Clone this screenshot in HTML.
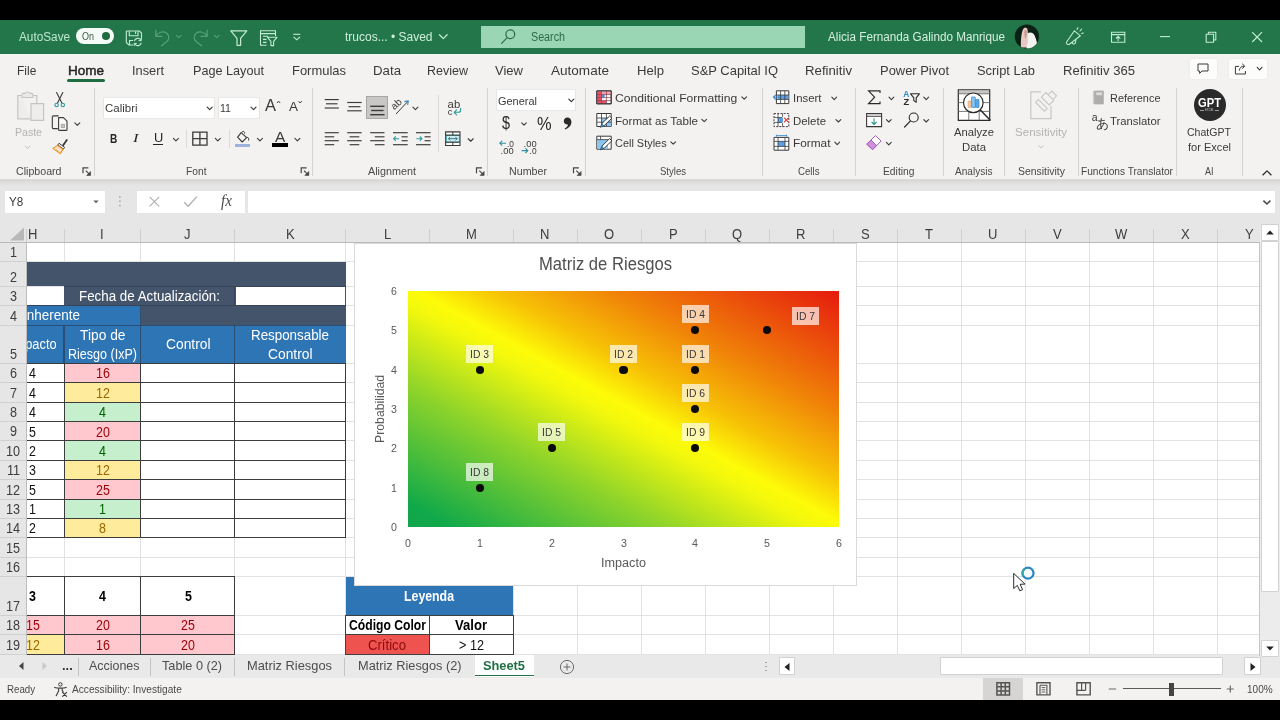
<!DOCTYPE html>
<html lang="es"><head><meta charset="utf-8"><title>Matriz de Riesgos - Excel</title>
<style>
html,body{margin:0;padding:0;}
body{width:1280px;height:720px;overflow:hidden;background:#000;position:relative;font-family:"Liberation Sans",sans-serif;}
#app{position:absolute;left:0;top:0;width:1280px;height:720px;overflow:hidden;will-change:transform;}
span{display:block;}
</style></head><body><div id="app">
<div style="position:absolute;left:0px;top:0px;width:1280px;height:20px;background:#000;"></div>
<div style="position:absolute;left:0px;top:700px;width:1280px;height:20px;background:#000;"></div>
<div style="position:absolute;left:0px;top:19.8px;width:1280px;height:33.9px;background:#22764a;"></div>
<div style="position:absolute;left:0px;top:53.7px;width:1280px;height:125.1px;background:#f3f2f1;"></div>
<div style="position:absolute;left:0px;top:53.7px;width:1280px;height:1.2px;background:#ecf8f0;"></div>
<div style="position:absolute;left:0px;top:178.8px;width:1280px;height:46.2px;background:#e6e6e6;background:linear-gradient(#dedcda 0px,#d8d6d4 1.2px,#e1e0df 4px,#e6e6e6 7.5px);"></div>
<div style="position:absolute;left:0px;top:225px;width:1280px;height:430px;background:#fff;"></div>
<div style="position:absolute;left:0px;top:655.3px;width:1280px;height:23.1px;background:#e9e9e9;"></div>
<div style="position:absolute;left:0px;top:678.4px;width:1280px;height:21.6px;background:#f3f2f1;"></div>
<span style='position:absolute;left:18.80px;top:30.94px;font-size:12.5px;line-height:12.5px;color:#bfe8cf;white-space:pre;transform-origin:0 0;transform:scaleX(0.9425);'>AutoSave</span>
<div style="position:absolute;left:75.7px;top:28.1px;width:38px;height:15.6px;border-radius:8px;background:#f4fbf6"></div>
<span style='position:absolute;left:82.00px;top:31.98px;font-size:10.2px;line-height:10.2px;color:#3d5c4a;white-space:pre;transform-origin:0 0;transform:scaleX(0.8828);'>On</span>
<div style="position:absolute;left:101.8px;top:32.2px;width:8px;height:8px;border-radius:4px;background:#1f6a41"></div>
<span style='position:absolute;left:345.00px;top:30.94px;font-size:12.5px;line-height:12.5px;color:#cfeedb;white-space:pre;transform-origin:0 0;transform:scaleX(0.9591);'>trucos... • Saved</span>
<div style="position:absolute;left:481.4px;top:25.6px;width:323.6px;height:22.4px;background:#9bd6b4;"></div>
<span style='position:absolute;left:531.00px;top:30.94px;font-size:12.5px;line-height:12.5px;color:#2c6b4a;white-space:pre;transform-origin:0 0;transform:scaleX(0.8584);'>Search</span>
<span style='position:absolute;left:827.50px;top:30.94px;font-size:12.5px;line-height:12.5px;color:#d6f0e0;white-space:pre;transform-origin:0 0;transform:scaleX(0.9365);'>Alicia Fernanda Galindo Manrique</span>
<span style='position:absolute;left:16.90px;top:64.01px;font-size:13.6px;line-height:13.6px;color:#3b3a39;white-space:pre;transform-origin:0 0;transform:scaleX(0.8810);'>File</span>
<span style='position:absolute;left:132.00px;top:64.01px;font-size:13.6px;line-height:13.6px;color:#3b3a39;white-space:pre;transform-origin:0 0;transform:scaleX(0.9412);'>Insert</span>
<span style='position:absolute;left:193.00px;top:64.01px;font-size:13.6px;line-height:13.6px;color:#3b3a39;white-space:pre;transform-origin:0 0;transform:scaleX(0.9300);'>Page Layout</span>
<span style='position:absolute;left:292.00px;top:64.01px;font-size:13.6px;line-height:13.6px;color:#3b3a39;white-space:pre;transform-origin:0 0;transform:scaleX(0.9531);'>Formulas</span>
<span style='position:absolute;left:373.00px;top:64.01px;font-size:13.6px;line-height:13.6px;color:#3b3a39;white-space:pre;transform-origin:0 0;transform:scaleX(0.9750);'>Data</span>
<span style='position:absolute;left:427.00px;top:64.01px;font-size:13.6px;line-height:13.6px;color:#3b3a39;white-space:pre;transform-origin:0 0;transform:scaleX(0.9197);'>Review</span>
<span style='position:absolute;left:495.00px;top:64.01px;font-size:13.6px;line-height:13.6px;color:#3b3a39;white-space:pre;transform-origin:0 0;transform:scaleX(0.9583);'>View</span>
<span style='position:absolute;left:551.00px;top:64.01px;font-size:13.6px;line-height:13.6px;color:#3b3a39;white-space:pre;transform-origin:0 0;transform:scaleX(0.9968);'>Automate</span>
<span style='position:absolute;left:637.00px;top:64.01px;font-size:13.6px;line-height:13.6px;color:#3b3a39;white-space:pre;transform-origin:0 0;transform:scaleX(0.9654);'>Help</span>
<span style='position:absolute;left:691.00px;top:64.01px;font-size:13.6px;line-height:13.6px;color:#3b3a39;white-space:pre;transform-origin:0 0;transform:scaleX(0.9541);'>S&amp;P Capital IQ</span>
<span style='position:absolute;left:805.00px;top:64.01px;font-size:13.6px;line-height:13.6px;color:#3b3a39;white-space:pre;transform-origin:0 0;transform:scaleX(0.9719);'>Refinitiv</span>
<span style='position:absolute;left:880.00px;top:64.01px;font-size:13.6px;line-height:13.6px;color:#3b3a39;white-space:pre;transform-origin:0 0;transform:scaleX(0.9513);'>Power Pivot</span>
<span style='position:absolute;left:977.00px;top:64.01px;font-size:13.6px;line-height:13.6px;color:#3b3a39;white-space:pre;transform-origin:0 0;transform:scaleX(0.9474);'>Script Lab</span>
<span style='position:absolute;left:1063.00px;top:64.01px;font-size:13.6px;line-height:13.6px;color:#3b3a39;white-space:pre;transform-origin:0 0;transform:scaleX(0.9624);'>Refinitiv 365</span>
<span style='position:absolute;left:67.70px;top:64.01px;font-size:13.6px;line-height:13.6px;color:#252423;white-space:pre;transform-origin:0 0;transform:scaleX(0.9954);-webkit-text-stroke:0.45px #252423;'>Home</span>
<div style="position:absolute;left:67px;top:78.8px;width:38px;height:3px;background:#1f6e43;border-radius:1.5px;"></div>
<div style="position:absolute;left:1189.5px;top:59px;width:27.8px;height:20px;background:#fcfcfb;border-radius:2px;box-shadow:0 0 2px rgba(0,0,0,.08);"></div>
<div style="position:absolute;left:1228.5px;top:59px;width:38.1px;height:20px;background:#fcfcfb;border-radius:2px;box-shadow:0 0 2px rgba(0,0,0,.08);"></div>
<div style="position:absolute;left:94px;top:88px;width:1px;height:88px;background:#d4d2d0;"></div>
<div style="position:absolute;left:312px;top:88px;width:1px;height:88px;background:#d4d2d0;"></div>
<div style="position:absolute;left:486.5px;top:88px;width:1px;height:88px;background:#d4d2d0;"></div>
<div style="position:absolute;left:584.5px;top:88px;width:1px;height:88px;background:#d4d2d0;"></div>
<div style="position:absolute;left:762px;top:88px;width:1px;height:88px;background:#d4d2d0;"></div>
<div style="position:absolute;left:854.5px;top:88px;width:1px;height:88px;background:#d4d2d0;"></div>
<div style="position:absolute;left:942.5px;top:88px;width:1px;height:88px;background:#d4d2d0;"></div>
<div style="position:absolute;left:1004px;top:88px;width:1px;height:88px;background:#d4d2d0;"></div>
<div style="position:absolute;left:1077.5px;top:88px;width:1px;height:88px;background:#d4d2d0;"></div>
<div style="position:absolute;left:1175.5px;top:88px;width:1px;height:88px;background:#d4d2d0;"></div>
<div style="position:absolute;left:1241.5px;top:88px;width:1px;height:88px;background:#d4d2d0;"></div>
<div style="position:absolute;left:185.5px;top:130px;width:1px;height:18px;background:#dcdad8;"></div>
<div style="position:absolute;left:228.5px;top:130px;width:1px;height:18px;background:#dcdad8;"></div>
<div style="position:absolute;left:437.5px;top:95px;width:1px;height:57px;background:#dcdad8;"></div>
<span style='position:absolute;left:15.50px;top:166.26px;font-size:10.7px;line-height:10.7px;color:#4a4846;white-space:pre;transform-origin:0 0;transform:scaleX(0.9945);'>Clipboard</span>
<span style='position:absolute;left:185.50px;top:166.26px;font-size:10.7px;line-height:10.7px;color:#4a4846;white-space:pre;transform-origin:0 0;transform:scaleX(0.9584);'>Font</span>
<span style='position:absolute;left:368.00px;top:166.26px;font-size:10.7px;line-height:10.7px;color:#4a4846;white-space:pre;transform-origin:0 0;transform:scaleX(1.0099);'>Alignment</span>
<span style='position:absolute;left:509.00px;top:166.26px;font-size:10.7px;line-height:10.7px;color:#4a4846;white-space:pre;transform-origin:0 0;transform:scaleX(0.9996);'>Number</span>
<span style='position:absolute;left:660.00px;top:166.26px;font-size:10.7px;line-height:10.7px;color:#4a4846;white-space:pre;transform-origin:0 0;transform:scaleX(0.8932);'>Styles</span>
<span style='position:absolute;left:797.50px;top:166.26px;font-size:10.7px;line-height:10.7px;color:#4a4846;white-space:pre;transform-origin:0 0;transform:scaleX(0.9047);'>Cells</span>
<span style='position:absolute;left:883.00px;top:166.26px;font-size:10.7px;line-height:10.7px;color:#4a4846;white-space:pre;transform-origin:0 0;transform:scaleX(0.9637);'>Editing</span>
<span style='position:absolute;left:955.00px;top:166.26px;font-size:10.7px;line-height:10.7px;color:#4a4846;white-space:pre;transform-origin:0 0;transform:scaleX(0.9423);'>Analysis</span>
<span style='position:absolute;left:1018.00px;top:166.26px;font-size:10.7px;line-height:10.7px;color:#4a4846;white-space:pre;transform-origin:0 0;transform:scaleX(0.9766);'>Sensitivity</span>
<span style='position:absolute;left:1081.00px;top:166.26px;font-size:10.7px;line-height:10.7px;color:#4a4846;white-space:pre;transform-origin:0 0;transform:scaleX(0.9501);'>Functions Translator</span>
<span style='position:absolute;left:1204.50px;top:166.26px;font-size:10.7px;line-height:10.7px;color:#4a4846;white-space:pre;transform-origin:0 0;transform:scaleX(0.8408);'>AI</span>
<span style='position:absolute;left:15.00px;top:126.31px;font-size:11.7px;line-height:11.7px;color:#b5b3b1;white-space:pre;transform-origin:0 0;transform:scaleX(0.9033);'>Paste</span>
<div style="position:absolute;left:102.5px;top:96.8px;width:112.5px;height:21.8px;background:#fff;border-radius:2px;box-shadow:inset 0 0 0 0.6px #d6d4d2;"></div>
<div style="position:absolute;left:217.8px;top:96.8px;width:41.8px;height:21.8px;background:#fff;border-radius:2px;box-shadow:inset 0 0 0 0.6px #d6d4d2;"></div>
<span style='position:absolute;left:104.50px;top:102.31px;font-size:11.7px;line-height:11.7px;color:#3b3a39;white-space:pre;transform-origin:0 0;transform:scaleX(0.9811);'>Calibri</span>
<span style='position:absolute;left:220.00px;top:102.31px;font-size:11.7px;line-height:11.7px;color:#3b3a39;white-space:pre;transform-origin:0 0;transform:scaleX(0.9060);'>11</span>
<span style='position:absolute;left:109.70px;top:132.08px;font-size:13.4px;line-height:13.4px;color:#252423;white-space:pre;transform-origin:0 0;transform:scaleX(0.7548);font-weight:700;'>B</span>
<span style='position:absolute;left:133.00px;top:131.09px;font-size:13.5px;line-height:13.5px;color:#252423;white-space:pre;transform-origin:0 0;transform:scaleX(1.2222);font-style:italic;font-family:"Liberation Serif", serif;'>I</span>
<span style='position:absolute;left:153.50px;top:131.95px;font-size:12.6px;line-height:12.6px;color:#252423;white-space:pre;transform-origin:0 0;transform:scaleX(1.0209);'>U</span>
<div style="position:absolute;left:153px;top:144px;width:10.2px;height:1px;background:#252423;"></div>
<span style='position:absolute;left:265.00px;top:97.41px;font-size:16.2px;line-height:16.2px;color:#3b3a39;white-space:pre;transform-origin:0 0;transform:scaleX(1.0173);'>A</span>
<span style='position:absolute;left:289.00px;top:100.95px;font-size:12.6px;line-height:12.6px;color:#3b3a39;white-space:pre;transform-origin:0 0;transform:scaleX(1.0706);'>A</span>
<span style='position:absolute;left:275.00px;top:130.06px;font-size:14.6px;line-height:14.6px;color:#3b3a39;white-space:pre;transform-origin:0 0;transform:scaleX(1.0581);'>A</span>
<div style="position:absolute;left:272px;top:143.3px;width:16px;height:4px;background:#000;"></div>
<div style="position:absolute;left:234.6px;top:143.9px;width:15.4px;height:2.9px;background:#9fb2dc;"></div>
<div style="position:absolute;left:366.4px;top:96.4px;width:21.6px;height:22.8px;background:#c9c7c5;box-shadow:inset 0 0 0 1px #a9a7a5;"></div>
<div style="position:absolute;left:496.3px;top:88.7px;width:80px;height:22px;background:#fff;border-radius:2px;box-shadow:inset 0 0 0 0.6px #d6d4d2;"></div>
<span style='position:absolute;left:498.00px;top:95.31px;font-size:11.7px;line-height:11.7px;color:#3b3a39;white-space:pre;transform-origin:0 0;transform:scaleX(0.9376);'>General</span>
<span style='position:absolute;left:502.00px;top:114.81px;font-size:17.5px;line-height:17.5px;color:#2b2a29;white-space:pre;transform-origin:0 0;transform:scaleX(0.8218);'>$</span>
<span style='position:absolute;left:536.70px;top:114.95px;font-size:18.4px;line-height:18.4px;color:#2b2a29;white-space:pre;transform-origin:0 0;transform:scaleX(0.8925);'>%</span>
<span style='position:absolute;left:614.60px;top:92.31px;font-size:11.7px;line-height:11.7px;color:#3b3a39;white-space:pre;transform-origin:0 0;transform:scaleX(1.0392);'>Conditional Formatting</span>
<span style='position:absolute;left:614.60px;top:115.31px;font-size:11.7px;line-height:11.7px;color:#3b3a39;white-space:pre;transform-origin:0 0;transform:scaleX(0.9929);'>Format as Table</span>
<span style='position:absolute;left:614.60px;top:137.31px;font-size:11.7px;line-height:11.7px;color:#3b3a39;white-space:pre;transform-origin:0 0;transform:scaleX(0.9345);'>Cell Styles</span>
<span style='position:absolute;left:792.50px;top:92.31px;font-size:11.7px;line-height:11.7px;color:#3b3a39;white-space:pre;transform-origin:0 0;transform:scaleX(0.9749);'>Insert</span>
<span style='position:absolute;left:792.50px;top:115.31px;font-size:11.7px;line-height:11.7px;color:#3b3a39;white-space:pre;transform-origin:0 0;transform:scaleX(0.9764);'>Delete</span>
<span style='position:absolute;left:792.50px;top:137.31px;font-size:11.7px;line-height:11.7px;color:#3b3a39;white-space:pre;transform-origin:0 0;transform:scaleX(1.0131);'>Format</span>
<span style='position:absolute;left:954.00px;top:126.31px;font-size:11.7px;line-height:11.7px;color:#3b3a39;white-space:pre;transform-origin:0 0;transform:scaleX(0.9617);'>Analyze</span>
<span style='position:absolute;left:962.20px;top:141.31px;font-size:11.7px;line-height:11.7px;color:#3b3a39;white-space:pre;transform-origin:0 0;transform:scaleX(0.9715);'>Data</span>
<span style='position:absolute;left:1015.00px;top:126.31px;font-size:11.7px;line-height:11.7px;color:#b5b3b1;white-space:pre;transform-origin:0 0;transform:scaleX(0.9881);'>Sensitivity</span>
<span style='position:absolute;left:1110.00px;top:92.31px;font-size:11.7px;line-height:11.7px;color:#3b3a39;white-space:pre;transform-origin:0 0;transform:scaleX(0.9363);'>Reference</span>
<span style='position:absolute;left:1110.00px;top:115.31px;font-size:11.7px;line-height:11.7px;color:#3b3a39;white-space:pre;transform-origin:0 0;transform:scaleX(0.9677);'>Translator</span>
<span style='position:absolute;left:1187.00px;top:126.31px;font-size:11.7px;line-height:11.7px;color:#3b3a39;white-space:pre;transform-origin:0 0;transform:scaleX(0.9031);'>ChatGPT</span>
<span style='position:absolute;left:1188.00px;top:141.31px;font-size:11.7px;line-height:11.7px;color:#3b3a39;white-space:pre;transform-origin:0 0;transform:scaleX(0.9457);'>for Excel</span>
<div style="position:absolute;left:1193.5px;top:89px;width:32px;height:32px;border-radius:16px;background:#2a2a2a"></div>
<span style='position:absolute;left:1197.80px;top:97.09px;font-size:12.2px;line-height:12.2px;color:#fff;white-space:pre;transform-origin:0 0;transform:scaleX(0.9177);font-weight:700;'>GPT</span>
<span style='position:absolute;left:1205.00px;top:109.17px;font-size:3px;line-height:3px;color:#cfcfcf;white-space:pre;transform-origin:0 0;transform:scaleX(0.9143);'>EXCEL</span>
<div style="position:absolute;left:1200px;top:110px;width:3.6px;height:0.5px;background:#9a9a9a;"></div>
<div style="position:absolute;left:1215.4px;top:110px;width:3.6px;height:0.5px;background:#9a9a9a;"></div>
<div style="position:absolute;left:4.6px;top:190.6px;width:100.6px;height:22px;background:#fff;"></div>
<div style="position:absolute;left:136.6px;top:190.6px;width:108.2px;height:22px;background:#fff;"></div>
<div style="position:absolute;left:248px;top:190.6px;width:1027.2px;height:22px;background:#fff;"></div>
<span style='position:absolute;left:9.20px;top:195.15px;font-size:13.2px;line-height:13.2px;color:#3b3a39;white-space:pre;transform-origin:0 0;transform:scaleX(0.8798);'>Y8</span>
<span style='position:absolute;left:221.00px;top:192.98px;font-size:16px;line-height:16px;color:#4a4a4a;white-space:pre;transform-origin:0 0;transform:scaleX(0.9353);font-style:italic;font-family:"Liberation Serif", serif;'>fx</span>
<div style="position:absolute;left:0px;top:225px;width:1260px;height:18px;background:#e6e6e6;"></div>
<div style="position:absolute;left:63.5px;top:243px;width:1px;height:412px;background:#e2e2e2;"></div>
<div style="position:absolute;left:63.5px;top:229px;width:1px;height:14px;background:#cfcfcf;"></div>
<div style="position:absolute;left:140px;top:243px;width:1px;height:412px;background:#e2e2e2;"></div>
<div style="position:absolute;left:140px;top:229px;width:1px;height:14px;background:#cfcfcf;"></div>
<div style="position:absolute;left:234px;top:243px;width:1px;height:412px;background:#e2e2e2;"></div>
<div style="position:absolute;left:234px;top:229px;width:1px;height:14px;background:#cfcfcf;"></div>
<div style="position:absolute;left:345px;top:243px;width:1px;height:412px;background:#e2e2e2;"></div>
<div style="position:absolute;left:345px;top:229px;width:1px;height:14px;background:#cfcfcf;"></div>
<div style="position:absolute;left:428.5px;top:243px;width:1px;height:412px;background:#e2e2e2;"></div>
<div style="position:absolute;left:428.5px;top:229px;width:1px;height:14px;background:#cfcfcf;"></div>
<div style="position:absolute;left:512.5px;top:243px;width:1px;height:412px;background:#e2e2e2;"></div>
<div style="position:absolute;left:512.5px;top:229px;width:1px;height:14px;background:#cfcfcf;"></div>
<div style="position:absolute;left:576.5px;top:243px;width:1px;height:412px;background:#e2e2e2;"></div>
<div style="position:absolute;left:576.5px;top:229px;width:1px;height:14px;background:#cfcfcf;"></div>
<div style="position:absolute;left:640.5px;top:243px;width:1px;height:412px;background:#e2e2e2;"></div>
<div style="position:absolute;left:640.5px;top:229px;width:1px;height:14px;background:#cfcfcf;"></div>
<div style="position:absolute;left:704.5px;top:243px;width:1px;height:412px;background:#e2e2e2;"></div>
<div style="position:absolute;left:704.5px;top:229px;width:1px;height:14px;background:#cfcfcf;"></div>
<div style="position:absolute;left:768.5px;top:243px;width:1px;height:412px;background:#e2e2e2;"></div>
<div style="position:absolute;left:768.5px;top:229px;width:1px;height:14px;background:#cfcfcf;"></div>
<div style="position:absolute;left:832.5px;top:243px;width:1px;height:412px;background:#e2e2e2;"></div>
<div style="position:absolute;left:832.5px;top:229px;width:1px;height:14px;background:#cfcfcf;"></div>
<div style="position:absolute;left:896.5px;top:243px;width:1px;height:412px;background:#e2e2e2;"></div>
<div style="position:absolute;left:896.5px;top:229px;width:1px;height:14px;background:#cfcfcf;"></div>
<div style="position:absolute;left:960.5px;top:243px;width:1px;height:412px;background:#e2e2e2;"></div>
<div style="position:absolute;left:960.5px;top:229px;width:1px;height:14px;background:#cfcfcf;"></div>
<div style="position:absolute;left:1024.5px;top:243px;width:1px;height:412px;background:#e2e2e2;"></div>
<div style="position:absolute;left:1024.5px;top:229px;width:1px;height:14px;background:#cfcfcf;"></div>
<div style="position:absolute;left:1088.5px;top:243px;width:1px;height:412px;background:#e2e2e2;"></div>
<div style="position:absolute;left:1088.5px;top:229px;width:1px;height:14px;background:#cfcfcf;"></div>
<div style="position:absolute;left:1152.5px;top:243px;width:1px;height:412px;background:#e2e2e2;"></div>
<div style="position:absolute;left:1152.5px;top:229px;width:1px;height:14px;background:#cfcfcf;"></div>
<div style="position:absolute;left:1216.5px;top:243px;width:1px;height:412px;background:#e2e2e2;"></div>
<div style="position:absolute;left:1216.5px;top:229px;width:1px;height:14px;background:#cfcfcf;"></div>
<div style="position:absolute;left:1261.5px;top:229px;width:1px;height:14px;background:#cfcfcf;"></div>
<div style="position:absolute;left:25.5px;top:229px;width:1px;height:14px;background:#cfcfcf;"></div>
<div style="position:absolute;left:26px;top:261px;width:1233.5px;height:1px;background:#e2e2e2;"></div>
<div style="position:absolute;left:26px;top:285.7px;width:1233.5px;height:1px;background:#e2e2e2;"></div>
<div style="position:absolute;left:26px;top:305.3px;width:1233.5px;height:1px;background:#e2e2e2;"></div>
<div style="position:absolute;left:26px;top:324.6px;width:1233.5px;height:1px;background:#e2e2e2;"></div>
<div style="position:absolute;left:26px;top:362.9px;width:1233.5px;height:1px;background:#e2e2e2;"></div>
<div style="position:absolute;left:26px;top:382.3px;width:1233.5px;height:1px;background:#e2e2e2;"></div>
<div style="position:absolute;left:26px;top:401.7px;width:1233.5px;height:1px;background:#e2e2e2;"></div>
<div style="position:absolute;left:26px;top:421px;width:1233.5px;height:1px;background:#e2e2e2;"></div>
<div style="position:absolute;left:26px;top:440.4px;width:1233.5px;height:1px;background:#e2e2e2;"></div>
<div style="position:absolute;left:26px;top:459.8px;width:1233.5px;height:1px;background:#e2e2e2;"></div>
<div style="position:absolute;left:26px;top:479.1px;width:1233.5px;height:1px;background:#e2e2e2;"></div>
<div style="position:absolute;left:26px;top:498.8px;width:1233.5px;height:1px;background:#e2e2e2;"></div>
<div style="position:absolute;left:26px;top:517.9px;width:1233.5px;height:1px;background:#e2e2e2;"></div>
<div style="position:absolute;left:26px;top:537.2px;width:1233.5px;height:1px;background:#e2e2e2;"></div>
<div style="position:absolute;left:26px;top:556.6px;width:1233.5px;height:1px;background:#e2e2e2;"></div>
<div style="position:absolute;left:26px;top:576px;width:1233.5px;height:1px;background:#e2e2e2;"></div>
<div style="position:absolute;left:26px;top:614.7px;width:1233.5px;height:1px;background:#e2e2e2;"></div>
<div style="position:absolute;left:26px;top:634.1px;width:1233.5px;height:1px;background:#e2e2e2;"></div>
<div style="position:absolute;left:26px;top:653.5px;width:1233.5px;height:1px;background:#e2e2e2;"></div>
<div style="position:absolute;left:0px;top:242.3px;width:1260px;height:1px;background:#b9b9b9;"></div>
<svg style="position:absolute;left:9px;top:227px;" width="16" height="14" viewBox="0 0 16 14"><path d="M15 0.5V13.5H1Z" fill="#b8b8b8"/></svg>
<span style='position:absolute;left:27.59px;top:227.37px;font-size:14px;line-height:14px;color:#3d3d3d;white-space:pre;transform-origin:0 0;transform:scaleX(0.9300);'>H</span>
<span style='position:absolute;left:100.44px;top:227.37px;font-size:14px;line-height:14px;color:#3d3d3d;white-space:pre;transform-origin:0 0;transform:scaleX(0.9300);'>I</span>
<span style='position:absolute;left:184.25px;top:227.37px;font-size:14px;line-height:14px;color:#3d3d3d;white-space:pre;transform-origin:0 0;transform:scaleX(0.9300);'>J</span>
<span style='position:absolute;left:285.66px;top:227.37px;font-size:14px;line-height:14px;color:#3d3d3d;white-space:pre;transform-origin:0 0;transform:scaleX(0.9300);'>K</span>
<span style='position:absolute;left:383.62px;top:227.37px;font-size:14px;line-height:14px;color:#3d3d3d;white-space:pre;transform-origin:0 0;transform:scaleX(0.9300);'>L</span>
<span style='position:absolute;left:465.57px;top:227.37px;font-size:14px;line-height:14px;color:#3d3d3d;white-space:pre;transform-origin:0 0;transform:scaleX(0.9300);'>M</span>
<span style='position:absolute;left:540.29px;top:227.37px;font-size:14px;line-height:14px;color:#3d3d3d;white-space:pre;transform-origin:0 0;transform:scaleX(0.9300);'>N</span>
<span style='position:absolute;left:603.94px;top:227.37px;font-size:14px;line-height:14px;color:#3d3d3d;white-space:pre;transform-origin:0 0;transform:scaleX(0.9300);'>O</span>
<span style='position:absolute;left:668.66px;top:227.37px;font-size:14px;line-height:14px;color:#3d3d3d;white-space:pre;transform-origin:0 0;transform:scaleX(0.9300);'>P</span>
<span style='position:absolute;left:731.94px;top:227.37px;font-size:14px;line-height:14px;color:#3d3d3d;white-space:pre;transform-origin:0 0;transform:scaleX(0.9300);'>Q</span>
<span style='position:absolute;left:796.29px;top:227.37px;font-size:14px;line-height:14px;color:#3d3d3d;white-space:pre;transform-origin:0 0;transform:scaleX(0.9300);'>R</span>
<span style='position:absolute;left:860.66px;top:227.37px;font-size:14px;line-height:14px;color:#3d3d3d;white-space:pre;transform-origin:0 0;transform:scaleX(0.9300);'>S</span>
<span style='position:absolute;left:925.02px;top:227.37px;font-size:14px;line-height:14px;color:#3d3d3d;white-space:pre;transform-origin:0 0;transform:scaleX(0.9300);'>T</span>
<span style='position:absolute;left:988.29px;top:227.37px;font-size:14px;line-height:14px;color:#3d3d3d;white-space:pre;transform-origin:0 0;transform:scaleX(0.9300);'>U</span>
<span style='position:absolute;left:1052.66px;top:227.37px;font-size:14px;line-height:14px;color:#3d3d3d;white-space:pre;transform-origin:0 0;transform:scaleX(0.9300);'>V</span>
<span style='position:absolute;left:1114.85px;top:227.37px;font-size:14px;line-height:14px;color:#3d3d3d;white-space:pre;transform-origin:0 0;transform:scaleX(0.9300);'>W</span>
<span style='position:absolute;left:1180.66px;top:227.37px;font-size:14px;line-height:14px;color:#3d3d3d;white-space:pre;transform-origin:0 0;transform:scaleX(0.9300);'>X</span>
<span style='position:absolute;left:1244.66px;top:227.37px;font-size:14px;line-height:14px;color:#3d3d3d;white-space:pre;transform-origin:0 0;transform:scaleX(0.9300);'>Y</span>
<div style="position:absolute;left:26px;top:261.5px;width:319.5px;height:24.7px;background:#44546a;"></div>
<div style="position:absolute;left:64px;top:286.2px;width:170.5px;height:19.6px;background:#44546a;"></div>
<div style="position:absolute;left:234.5px;top:286.2px;width:111px;height:1px;background:#44546a;"></div>
<div style="position:absolute;left:234.5px;top:304.8px;width:111px;height:1px;background:#44546a;"></div>
<div style="position:absolute;left:344.5px;top:286.2px;width:1.3px;height:19.6px;background:#44546a;"></div>
<div style="position:absolute;left:234px;top:286.2px;width:1.5px;height:19.6px;background:#44546a;"></div>
<div style="position:absolute;left:26px;top:305.8px;width:114.5px;height:19.3px;background:#2e75b6;"></div>
<div style="position:absolute;left:140.5px;top:305.8px;width:205px;height:19.3px;background:#44546a;"></div>
<div style="position:absolute;left:26px;top:325.1px;width:319.5px;height:38.3px;background:#2e75b6;"></div>
<div style="position:absolute;left:63.5px;top:286.2px;width:1px;height:19.6px;background:#44546a;"></div>
<div style="position:absolute;left:64px;top:285.7px;width:281.5px;height:1px;background:#36445a;"></div>
<div style="position:absolute;left:26px;top:305.3px;width:319.5px;height:1px;background:#36445a;"></div>
<div style="position:absolute;left:234.2px;top:286.2px;width:1px;height:19.6px;background:#36445a;"></div>
<span style='position:absolute;left:79.00px;top:289.94px;font-size:13.8px;line-height:13.8px;color:#fff;white-space:pre;transform-origin:0 0;transform:scaleX(0.9675);'>Fecha de Actualización:</span>
<span style='position:absolute;left:23.20px;top:308.94px;font-size:13.8px;line-height:13.8px;color:#fff;white-space:pre;transform-origin:0 0;transform:scaleX(0.9758);'>Inherente</span>
<span style='position:absolute;left:11.00px;top:337.94px;font-size:13.8px;line-height:13.8px;color:#fff;white-space:pre;transform-origin:0 0;transform:scaleX(0.9291);'>Impacto</span>
<span style='position:absolute;left:79.50px;top:328.94px;font-size:13.8px;line-height:13.8px;color:#fff;white-space:pre;transform-origin:0 0;transform:scaleX(0.9997);'>Tipo de</span>
<span style='position:absolute;left:68.00px;top:347.94px;font-size:13.8px;line-height:13.8px;color:#fff;white-space:pre;transform-origin:0 0;transform:scaleX(0.9090);'>Riesgo (IxP)</span>
<span style='position:absolute;left:165.50px;top:337.94px;font-size:13.8px;line-height:13.8px;color:#fff;white-space:pre;transform-origin:0 0;transform:scaleX(1.0004);'>Control</span>
<span style='position:absolute;left:251.00px;top:328.94px;font-size:13.8px;line-height:13.8px;color:#fff;white-space:pre;transform-origin:0 0;transform:scaleX(0.9684);'>Responsable</span>
<span style='position:absolute;left:267.50px;top:347.94px;font-size:13.8px;line-height:13.8px;color:#fff;white-space:pre;transform-origin:0 0;transform:scaleX(1.0004);'>Control</span>
<div style="position:absolute;left:63.4px;top:325.1px;width:1.2px;height:38.3px;background:#2a4d73;"></div>
<div style="position:absolute;left:139.9px;top:325.1px;width:1.2px;height:38.3px;background:#2a4d73;"></div>
<div style="position:absolute;left:233.9px;top:325.1px;width:1.2px;height:38.3px;background:#2a4d73;"></div>
<div style="position:absolute;left:26px;top:324.6px;width:319.5px;height:1px;background:#2a4d73;"></div>
<div style="position:absolute;left:140px;top:305.8px;width:1px;height:19.3px;background:#34506f;"></div>
<div style="position:absolute;left:64px;top:363.4px;width:76.5px;height:19.4px;background:#ffc7ce;"></div>
<span style='position:absolute;left:28.64px;top:366.94px;font-size:13.8px;line-height:13.8px;color:#111;white-space:pre;transform-origin:0 0;transform:scaleX(0.9000);'>4</span>
<span style='position:absolute;left:95.59px;top:366.94px;font-size:13.8px;line-height:13.8px;color:#9c0006;white-space:pre;transform-origin:0 0;transform:scaleX(0.9000);'>16</span>
<div style="position:absolute;left:64px;top:382.8px;width:76.5px;height:19.4px;background:#ffeb9c;"></div>
<span style='position:absolute;left:28.64px;top:386.94px;font-size:13.8px;line-height:13.8px;color:#111;white-space:pre;transform-origin:0 0;transform:scaleX(0.9000);'>4</span>
<span style='position:absolute;left:95.59px;top:386.94px;font-size:13.8px;line-height:13.8px;color:#9c6500;white-space:pre;transform-origin:0 0;transform:scaleX(0.9000);'>12</span>
<div style="position:absolute;left:64px;top:402.2px;width:76.5px;height:19.3px;background:#c6efce;"></div>
<span style='position:absolute;left:28.64px;top:405.94px;font-size:13.8px;line-height:13.8px;color:#111;white-space:pre;transform-origin:0 0;transform:scaleX(0.9000);'>4</span>
<span style='position:absolute;left:99.04px;top:405.94px;font-size:13.8px;line-height:13.8px;color:#006100;white-space:pre;transform-origin:0 0;transform:scaleX(0.9000);'>4</span>
<div style="position:absolute;left:64px;top:421.5px;width:76.5px;height:19.4px;background:#ffc7ce;"></div>
<span style='position:absolute;left:28.64px;top:425.94px;font-size:13.8px;line-height:13.8px;color:#111;white-space:pre;transform-origin:0 0;transform:scaleX(0.9000);'>5</span>
<span style='position:absolute;left:95.59px;top:425.94px;font-size:13.8px;line-height:13.8px;color:#9c0006;white-space:pre;transform-origin:0 0;transform:scaleX(0.9000);'>20</span>
<div style="position:absolute;left:64px;top:440.9px;width:76.5px;height:19.4px;background:#c6efce;"></div>
<span style='position:absolute;left:28.64px;top:444.94px;font-size:13.8px;line-height:13.8px;color:#111;white-space:pre;transform-origin:0 0;transform:scaleX(0.9000);'>2</span>
<span style='position:absolute;left:99.04px;top:444.94px;font-size:13.8px;line-height:13.8px;color:#006100;white-space:pre;transform-origin:0 0;transform:scaleX(0.9000);'>4</span>
<div style="position:absolute;left:64px;top:460.3px;width:76.5px;height:19.3px;background:#ffeb9c;"></div>
<span style='position:absolute;left:28.64px;top:463.94px;font-size:13.8px;line-height:13.8px;color:#111;white-space:pre;transform-origin:0 0;transform:scaleX(0.9000);'>3</span>
<span style='position:absolute;left:95.59px;top:463.94px;font-size:13.8px;line-height:13.8px;color:#9c6500;white-space:pre;transform-origin:0 0;transform:scaleX(0.9000);'>12</span>
<div style="position:absolute;left:64px;top:479.6px;width:76.5px;height:19.7px;background:#ffc7ce;"></div>
<span style='position:absolute;left:28.64px;top:483.94px;font-size:13.8px;line-height:13.8px;color:#111;white-space:pre;transform-origin:0 0;transform:scaleX(0.9000);'>5</span>
<span style='position:absolute;left:95.59px;top:483.94px;font-size:13.8px;line-height:13.8px;color:#9c0006;white-space:pre;transform-origin:0 0;transform:scaleX(0.9000);'>25</span>
<div style="position:absolute;left:64px;top:499.3px;width:76.5px;height:19.1px;background:#c6efce;"></div>
<span style='position:absolute;left:28.64px;top:502.94px;font-size:13.8px;line-height:13.8px;color:#111;white-space:pre;transform-origin:0 0;transform:scaleX(0.9000);'>1</span>
<span style='position:absolute;left:99.04px;top:502.94px;font-size:13.8px;line-height:13.8px;color:#006100;white-space:pre;transform-origin:0 0;transform:scaleX(0.9000);'>1</span>
<div style="position:absolute;left:64px;top:518.4px;width:76.5px;height:19.3px;background:#ffeb9c;"></div>
<span style='position:absolute;left:28.64px;top:521.94px;font-size:13.8px;line-height:13.8px;color:#111;white-space:pre;transform-origin:0 0;transform:scaleX(0.9000);'>2</span>
<span style='position:absolute;left:99.04px;top:521.94px;font-size:13.8px;line-height:13.8px;color:#9c6500;white-space:pre;transform-origin:0 0;transform:scaleX(0.9000);'>8</span>
<div style="position:absolute;left:26px;top:382.25px;width:319.5px;height:1.1px;background:#3c3c3c;"></div>
<div style="position:absolute;left:26px;top:401.65px;width:319.5px;height:1.1px;background:#3c3c3c;"></div>
<div style="position:absolute;left:26px;top:420.95px;width:319.5px;height:1.1px;background:#3c3c3c;"></div>
<div style="position:absolute;left:26px;top:440.35px;width:319.5px;height:1.1px;background:#3c3c3c;"></div>
<div style="position:absolute;left:26px;top:459.75px;width:319.5px;height:1.1px;background:#3c3c3c;"></div>
<div style="position:absolute;left:26px;top:479.05px;width:319.5px;height:1.1px;background:#3c3c3c;"></div>
<div style="position:absolute;left:26px;top:498.75px;width:319.5px;height:1.1px;background:#3c3c3c;"></div>
<div style="position:absolute;left:26px;top:517.85px;width:319.5px;height:1.1px;background:#3c3c3c;"></div>
<div style="position:absolute;left:26px;top:537.15px;width:319.5px;height:1.1px;background:#3c3c3c;"></div>
<div style="position:absolute;left:26px;top:362.85px;width:319.5px;height:1.1px;background:#3c3c3c;"></div>
<div style="position:absolute;left:63.75px;top:363.4px;width:1.1px;height:174.3px;background:#3c3c3c;"></div>
<div style="position:absolute;left:139.85px;top:363.4px;width:1.1px;height:174.3px;background:#3c3c3c;"></div>
<div style="position:absolute;left:234.15px;top:363.4px;width:1.1px;height:174.3px;background:#3c3c3c;"></div>
<div style="position:absolute;left:344.95px;top:363.4px;width:1.1px;height:174.3px;background:#3c3c3c;"></div>
<div style="position:absolute;left:26px;top:615.2px;width:208.5px;height:19.4px;background:#ffc7ce;"></div>
<div style="position:absolute;left:26px;top:634.6px;width:38px;height:19.4px;background:#ffeb9c;"></div>
<div style="position:absolute;left:64px;top:634.6px;width:170.5px;height:19.4px;background:#ffc7ce;"></div>
<div style="position:absolute;left:26px;top:575.95px;width:208.5px;height:1.1px;background:#3c3c3c;"></div>
<div style="position:absolute;left:26px;top:614.65px;width:208.5px;height:1.1px;background:#3c3c3c;"></div>
<div style="position:absolute;left:26px;top:634.05px;width:208.5px;height:1.1px;background:#3c3c3c;"></div>
<div style="position:absolute;left:63.75px;top:576.5px;width:1.1px;height:78.5px;background:#3c3c3c;"></div>
<div style="position:absolute;left:139.85px;top:576.5px;width:1.1px;height:78.5px;background:#3c3c3c;"></div>
<div style="position:absolute;left:234.15px;top:576.5px;width:1.1px;height:78.5px;background:#3c3c3c;"></div>
<span style='position:absolute;left:28.94px;top:589.94px;font-size:13.8px;line-height:13.8px;color:#000;white-space:pre;transform-origin:0 0;transform:scaleX(0.9000);font-weight:700;'>3</span>
<span style='position:absolute;left:99.24px;top:589.94px;font-size:13.8px;line-height:13.8px;color:#000;white-space:pre;transform-origin:0 0;transform:scaleX(0.9000);font-weight:700;'>4</span>
<span style='position:absolute;left:184.54px;top:589.94px;font-size:13.8px;line-height:13.8px;color:#000;white-space:pre;transform-origin:0 0;transform:scaleX(0.9000);font-weight:700;'>5</span>
<span style='position:absolute;left:25.79px;top:618.94px;font-size:13.8px;line-height:13.8px;color:#9c0006;white-space:pre;transform-origin:0 0;transform:scaleX(0.9000);'>15</span>
<span style='position:absolute;left:95.59px;top:618.94px;font-size:13.8px;line-height:13.8px;color:#9c0006;white-space:pre;transform-origin:0 0;transform:scaleX(0.9000);'>20</span>
<span style='position:absolute;left:181.09px;top:618.94px;font-size:13.8px;line-height:13.8px;color:#9c0006;white-space:pre;transform-origin:0 0;transform:scaleX(0.9000);'>25</span>
<span style='position:absolute;left:25.79px;top:638.94px;font-size:13.8px;line-height:13.8px;color:#9c6500;white-space:pre;transform-origin:0 0;transform:scaleX(0.9000);'>12</span>
<span style='position:absolute;left:95.59px;top:638.94px;font-size:13.8px;line-height:13.8px;color:#9c0006;white-space:pre;transform-origin:0 0;transform:scaleX(0.9000);'>16</span>
<span style='position:absolute;left:181.09px;top:638.94px;font-size:13.8px;line-height:13.8px;color:#9c0006;white-space:pre;transform-origin:0 0;transform:scaleX(0.9000);'>20</span>
<div style="position:absolute;left:26px;top:654.05px;width:208.5px;height:1.1px;background:#3c3c3c;"></div>
<div style="position:absolute;left:345.5px;top:576.5px;width:167.5px;height:38.7px;background:#2e75b6;"></div>
<span style='position:absolute;left:404.00px;top:589.94px;font-size:13.8px;line-height:13.8px;color:#fff;white-space:pre;transform-origin:0 0;transform:scaleX(0.8931);font-weight:700;'>Leyenda</span>
<div style="position:absolute;left:345.5px;top:634.6px;width:83.5px;height:19.4px;background:#ee5350;"></div>
<span style='position:absolute;left:349.00px;top:618.94px;font-size:13.8px;line-height:13.8px;color:#000;white-space:pre;transform-origin:0 0;transform:scaleX(0.8813);font-weight:700;'>Código Color</span>
<span style='position:absolute;left:455.00px;top:618.94px;font-size:13.8px;line-height:13.8px;color:#000;white-space:pre;transform-origin:0 0;transform:scaleX(0.9481);font-weight:700;'>Valor</span>
<span style='position:absolute;left:368.00px;top:638.94px;font-size:13.8px;line-height:13.8px;color:#8c0a0a;white-space:pre;transform-origin:0 0;transform:scaleX(0.9530);'>Crítico</span>
<span style='position:absolute;left:459.00px;top:638.94px;font-size:13.8px;line-height:13.8px;color:#111;white-space:pre;transform-origin:0 0;transform:scaleX(0.9174);'>&gt; 12</span>
<div style="position:absolute;left:345.5px;top:614.725px;width:167.5px;height:0.95px;background:#3f3f3f;"></div>
<div style="position:absolute;left:345.5px;top:634.125px;width:167.5px;height:0.95px;background:#3f3f3f;"></div>
<div style="position:absolute;left:345.5px;top:653.825px;width:167.5px;height:0.95px;background:#3f3f3f;"></div>
<div style="position:absolute;left:345.125px;top:615.2px;width:0.95px;height:39.8px;background:#3f3f3f;"></div>
<div style="position:absolute;left:428.725px;top:615.2px;width:0.95px;height:39.8px;background:#3f3f3f;"></div>
<div style="position:absolute;left:512.525px;top:615.2px;width:0.95px;height:39.8px;background:#3f3f3f;"></div>
<div style="position:absolute;left:0px;top:243px;width:26px;height:412.3px;background:#e6e6e6;"></div>
<div style="position:absolute;left:0px;top:261px;width:26px;height:1px;background:#d0d0d0;"></div>
<div style="position:absolute;left:0px;top:285.7px;width:26px;height:1px;background:#d0d0d0;"></div>
<div style="position:absolute;left:0px;top:305.3px;width:26px;height:1px;background:#d0d0d0;"></div>
<div style="position:absolute;left:0px;top:324.6px;width:26px;height:1px;background:#d0d0d0;"></div>
<div style="position:absolute;left:0px;top:362.9px;width:26px;height:1px;background:#d0d0d0;"></div>
<div style="position:absolute;left:0px;top:382.3px;width:26px;height:1px;background:#d0d0d0;"></div>
<div style="position:absolute;left:0px;top:401.7px;width:26px;height:1px;background:#d0d0d0;"></div>
<div style="position:absolute;left:0px;top:421px;width:26px;height:1px;background:#d0d0d0;"></div>
<div style="position:absolute;left:0px;top:440.4px;width:26px;height:1px;background:#d0d0d0;"></div>
<div style="position:absolute;left:0px;top:459.8px;width:26px;height:1px;background:#d0d0d0;"></div>
<div style="position:absolute;left:0px;top:479.1px;width:26px;height:1px;background:#d0d0d0;"></div>
<div style="position:absolute;left:0px;top:498.8px;width:26px;height:1px;background:#d0d0d0;"></div>
<div style="position:absolute;left:0px;top:517.9px;width:26px;height:1px;background:#d0d0d0;"></div>
<div style="position:absolute;left:0px;top:537.2px;width:26px;height:1px;background:#d0d0d0;"></div>
<div style="position:absolute;left:0px;top:556.6px;width:26px;height:1px;background:#d0d0d0;"></div>
<div style="position:absolute;left:0px;top:576px;width:26px;height:1px;background:#d0d0d0;"></div>
<div style="position:absolute;left:0px;top:614.7px;width:26px;height:1px;background:#d0d0d0;"></div>
<div style="position:absolute;left:0px;top:634.1px;width:26px;height:1px;background:#d0d0d0;"></div>
<div style="position:absolute;left:0px;top:653.5px;width:26px;height:1px;background:#d0d0d0;"></div>
<div style="position:absolute;left:25.5px;top:243px;width:1px;height:412.3px;background:#bdbdbd;"></div>
<span style='position:absolute;left:9.89px;top:245.37px;font-size:14px;line-height:14px;color:#3d3d3d;white-space:pre;transform-origin:0 0;transform:scaleX(0.9000);'>1</span>
<span style='position:absolute;left:9.89px;top:270.37px;font-size:14px;line-height:14px;color:#3d3d3d;white-space:pre;transform-origin:0 0;transform:scaleX(0.9000);'>2</span>
<span style='position:absolute;left:9.89px;top:289.37px;font-size:14px;line-height:14px;color:#3d3d3d;white-space:pre;transform-origin:0 0;transform:scaleX(0.9000);'>3</span>
<span style='position:absolute;left:9.89px;top:309.37px;font-size:14px;line-height:14px;color:#3d3d3d;white-space:pre;transform-origin:0 0;transform:scaleX(0.9000);'>4</span>
<span style='position:absolute;left:9.89px;top:347.37px;font-size:14px;line-height:14px;color:#3d3d3d;white-space:pre;transform-origin:0 0;transform:scaleX(0.9000);'>5</span>
<span style='position:absolute;left:9.89px;top:366.37px;font-size:14px;line-height:14px;color:#3d3d3d;white-space:pre;transform-origin:0 0;transform:scaleX(0.9000);'>6</span>
<span style='position:absolute;left:9.89px;top:386.37px;font-size:14px;line-height:14px;color:#3d3d3d;white-space:pre;transform-origin:0 0;transform:scaleX(0.9000);'>7</span>
<span style='position:absolute;left:9.89px;top:405.37px;font-size:14px;line-height:14px;color:#3d3d3d;white-space:pre;transform-origin:0 0;transform:scaleX(0.9000);'>8</span>
<span style='position:absolute;left:9.89px;top:424.37px;font-size:14px;line-height:14px;color:#3d3d3d;white-space:pre;transform-origin:0 0;transform:scaleX(0.9000);'>9</span>
<span style='position:absolute;left:6.39px;top:444.37px;font-size:14px;line-height:14px;color:#3d3d3d;white-space:pre;transform-origin:0 0;transform:scaleX(0.9000);'>10</span>
<span style='position:absolute;left:6.85px;top:463.37px;font-size:14px;line-height:14px;color:#3d3d3d;white-space:pre;transform-origin:0 0;transform:scaleX(0.9000);'>11</span>
<span style='position:absolute;left:6.39px;top:483.37px;font-size:14px;line-height:14px;color:#3d3d3d;white-space:pre;transform-origin:0 0;transform:scaleX(0.9000);'>12</span>
<span style='position:absolute;left:6.39px;top:502.37px;font-size:14px;line-height:14px;color:#3d3d3d;white-space:pre;transform-origin:0 0;transform:scaleX(0.9000);'>13</span>
<span style='position:absolute;left:6.39px;top:521.37px;font-size:14px;line-height:14px;color:#3d3d3d;white-space:pre;transform-origin:0 0;transform:scaleX(0.9000);'>14</span>
<span style='position:absolute;left:6.39px;top:541.37px;font-size:14px;line-height:14px;color:#3d3d3d;white-space:pre;transform-origin:0 0;transform:scaleX(0.9000);'>15</span>
<span style='position:absolute;left:6.39px;top:560.37px;font-size:14px;line-height:14px;color:#3d3d3d;white-space:pre;transform-origin:0 0;transform:scaleX(0.9000);'>16</span>
<span style='position:absolute;left:6.39px;top:599.37px;font-size:14px;line-height:14px;color:#3d3d3d;white-space:pre;transform-origin:0 0;transform:scaleX(0.9000);'>17</span>
<span style='position:absolute;left:6.39px;top:618.37px;font-size:14px;line-height:14px;color:#3d3d3d;white-space:pre;transform-origin:0 0;transform:scaleX(0.9000);'>18</span>
<span style='position:absolute;left:6.39px;top:638.37px;font-size:14px;line-height:14px;color:#3d3d3d;white-space:pre;transform-origin:0 0;transform:scaleX(0.9000);'>19</span>
<div style="position:absolute;left:353.7px;top:242.8px;width:503.3px;height:343.7px;background:#fff;box-shadow:inset 0 0 0 1px #dadada;"></div>
<div style="position:absolute;left:408px;top:291px;width:431px;height:236px;background:linear-gradient(to top right,#14a44c 0%,#10a94a 5%,#8fd42a 30%,#f3f80c 47%,#fdfb08 51%,#f7c306 60%,#f08208 74%,#e61a0e 100%)"></div>
<span style='position:absolute;left:539.00px;top:255.81px;font-size:17.5px;line-height:17.5px;color:#505050;white-space:pre;transform-origin:0 0;transform:scaleX(0.9496);'>Matriz de Riesgos</span>
<span style='position:absolute;left:405.04px;top:538.04px;font-size:11.2px;line-height:11.2px;color:#595959;white-space:pre;transform-origin:0 0;transform:scaleX(0.9500);'>0</span>
<span style='position:absolute;left:391.04px;top:522.04px;font-size:11.2px;line-height:11.2px;color:#595959;white-space:pre;transform-origin:0 0;transform:scaleX(0.9500);'>0</span>
<span style='position:absolute;left:476.87px;top:538.04px;font-size:11.2px;line-height:11.2px;color:#595959;white-space:pre;transform-origin:0 0;transform:scaleX(0.9500);'>1</span>
<span style='position:absolute;left:391.04px;top:483.04px;font-size:11.2px;line-height:11.2px;color:#595959;white-space:pre;transform-origin:0 0;transform:scaleX(0.9500);'>1</span>
<span style='position:absolute;left:548.70px;top:538.04px;font-size:11.2px;line-height:11.2px;color:#595959;white-space:pre;transform-origin:0 0;transform:scaleX(0.9500);'>2</span>
<span style='position:absolute;left:391.04px;top:443.04px;font-size:11.2px;line-height:11.2px;color:#595959;white-space:pre;transform-origin:0 0;transform:scaleX(0.9500);'>2</span>
<span style='position:absolute;left:620.53px;top:538.04px;font-size:11.2px;line-height:11.2px;color:#595959;white-space:pre;transform-origin:0 0;transform:scaleX(0.9500);'>3</span>
<span style='position:absolute;left:391.04px;top:404.04px;font-size:11.2px;line-height:11.2px;color:#595959;white-space:pre;transform-origin:0 0;transform:scaleX(0.9500);'>3</span>
<span style='position:absolute;left:692.36px;top:538.04px;font-size:11.2px;line-height:11.2px;color:#595959;white-space:pre;transform-origin:0 0;transform:scaleX(0.9500);'>4</span>
<span style='position:absolute;left:391.04px;top:365.04px;font-size:11.2px;line-height:11.2px;color:#595959;white-space:pre;transform-origin:0 0;transform:scaleX(0.9500);'>4</span>
<span style='position:absolute;left:764.19px;top:538.04px;font-size:11.2px;line-height:11.2px;color:#595959;white-space:pre;transform-origin:0 0;transform:scaleX(0.9500);'>5</span>
<span style='position:absolute;left:391.04px;top:325.04px;font-size:11.2px;line-height:11.2px;color:#595959;white-space:pre;transform-origin:0 0;transform:scaleX(0.9500);'>5</span>
<span style='position:absolute;left:836.02px;top:538.04px;font-size:11.2px;line-height:11.2px;color:#595959;white-space:pre;transform-origin:0 0;transform:scaleX(0.9500);'>6</span>
<span style='position:absolute;left:391.04px;top:286.04px;font-size:11.2px;line-height:11.2px;color:#595959;white-space:pre;transform-origin:0 0;transform:scaleX(0.9500);'>6</span>
<span style='position:absolute;left:601.00px;top:556.94px;font-size:12.5px;line-height:12.5px;color:#595959;white-space:pre;transform-origin:0 0;transform:scaleX(1.0119);'>Impacto</span>
<span style="position:absolute;left:374.2px;top:443.4px;font-size:12.5px;line-height:12.5px;color:#595959;white-space:pre;transform-origin:0 0;transform:rotate(-90deg) scaleX(0.98);">Probabilidad</span>
<div style="position:absolute;left:691.2px;top:365.6px;width:8.2px;height:8.2px;border-radius:5px;background:#0a0a0a"></div>
<div style="position:absolute;left:681.6px;top:344.7px;width:27.4px;height:18px;background:rgba(255,255,255,0.68);"></div>
<span style='position:absolute;left:685.82px;top:349.10px;font-size:11px;line-height:11px;color:#383838;white-space:pre;transform-origin:0 0;transform:scaleX(0.9412);'>ID 1</span>
<div style="position:absolute;left:619.4px;top:365.6px;width:8.2px;height:8.2px;border-radius:5px;background:#0a0a0a"></div>
<div style="position:absolute;left:609.8px;top:344.7px;width:27.4px;height:18px;background:rgba(255,255,255,0.68);"></div>
<span style='position:absolute;left:613.99px;top:349.10px;font-size:11px;line-height:11px;color:#383838;white-space:pre;transform-origin:0 0;transform:scaleX(0.9412);'>ID 2</span>
<div style="position:absolute;left:475.7px;top:365.6px;width:8.2px;height:8.2px;border-radius:5px;background:#0a0a0a"></div>
<div style="position:absolute;left:466.1px;top:344.7px;width:27.4px;height:18px;background:rgba(255,255,255,0.68);"></div>
<span style='position:absolute;left:470.33px;top:349.10px;font-size:11px;line-height:11px;color:#383838;white-space:pre;transform-origin:0 0;transform:scaleX(0.9412);'>ID 3</span>
<div style="position:absolute;left:691.2px;top:326.2px;width:8.2px;height:8.2px;border-radius:5px;background:#0a0a0a"></div>
<div style="position:absolute;left:681.6px;top:305.4px;width:27.4px;height:18px;background:rgba(255,255,255,0.68);"></div>
<span style='position:absolute;left:685.82px;top:309.10px;font-size:11px;line-height:11px;color:#383838;white-space:pre;transform-origin:0 0;transform:scaleX(0.9412);'>ID 4</span>
<div style="position:absolute;left:547.6px;top:444.2px;width:8.2px;height:8.2px;border-radius:5px;background:#0a0a0a"></div>
<div style="position:absolute;left:538px;top:423.3px;width:27.4px;height:18px;background:rgba(255,255,255,0.68);"></div>
<span style='position:absolute;left:542.16px;top:427.10px;font-size:11px;line-height:11px;color:#383838;white-space:pre;transform-origin:0 0;transform:scaleX(0.9412);'>ID 5</span>
<div style="position:absolute;left:691.2px;top:404.9px;width:8.2px;height:8.2px;border-radius:5px;background:#0a0a0a"></div>
<div style="position:absolute;left:681.6px;top:384px;width:27.4px;height:18px;background:rgba(255,255,255,0.68);"></div>
<span style='position:absolute;left:685.82px;top:388.10px;font-size:11px;line-height:11px;color:#383838;white-space:pre;transform-origin:0 0;transform:scaleX(0.9412);'>ID 6</span>
<div style="position:absolute;left:763.0px;top:326.2px;width:8.2px;height:8.2px;border-radius:5px;background:#0a0a0a"></div>
<div style="position:absolute;left:791.9px;top:307.4px;width:27.5px;height:18px;background:rgba(255,255,255,0.68);"></div>
<span style='position:absolute;left:796.15px;top:311.10px;font-size:11px;line-height:11px;color:#383838;white-space:pre;transform-origin:0 0;transform:scaleX(0.9412);'>ID 7</span>
<div style="position:absolute;left:475.7px;top:483.6px;width:8.2px;height:8.2px;border-radius:5px;background:#0a0a0a"></div>
<div style="position:absolute;left:466.1px;top:462.7px;width:27.4px;height:18px;background:rgba(255,255,255,0.68);"></div>
<span style='position:absolute;left:470.33px;top:467.10px;font-size:11px;line-height:11px;color:#383838;white-space:pre;transform-origin:0 0;transform:scaleX(0.9412);'>ID 8</span>
<div style="position:absolute;left:691.2px;top:444.2px;width:8.2px;height:8.2px;border-radius:5px;background:#0a0a0a"></div>
<div style="position:absolute;left:681.6px;top:423.3px;width:27.4px;height:18px;background:rgba(255,255,255,0.68);"></div>
<span style='position:absolute;left:685.82px;top:427.10px;font-size:11px;line-height:11px;color:#383838;white-space:pre;transform-origin:0 0;transform:scaleX(0.9412);'>ID 9</span>
<div style="position:absolute;left:1260px;top:225px;width:20px;height:431px;background:#ececec;"></div>
<div style="position:absolute;left:1259.3px;top:243px;width:1px;height:412.5px;background:#c6c6c6;"></div>
<div style="position:absolute;left:1261.8px;top:224.6px;width:16.4px;height:15.8px;background:#fff;box-shadow:0 0 0 0.6px #c2c2c2;"></div>
<div style="position:absolute;left:1262.3px;top:241.6px;width:15.5px;height:349.4px;background:#fff;box-shadow:0 0 0 0.6px #c2c2c2;"></div>
<div style="position:absolute;left:1262.3px;top:640.5px;width:15.5px;height:15px;background:#fff;box-shadow:0 0 0 0.6px #c2c2c2;"></div>
<svg style="position:absolute;left:1264.7px;top:230px;" width="10" height="8" viewBox="0 0 10 8"><path d="M5 0.5L8.8 4.4H1.2Z" fill="#222"/></svg>
<svg style="position:absolute;left:1264.7px;top:644.6px;" width="10" height="8" viewBox="0 0 10 8"><path d="M5 5.4L8.8 1.5H1.2Z" fill="#222"/></svg>
<div style="position:absolute;left:779.6px;top:658.4px;width:14.8px;height:15.8px;background:#fff;box-shadow:0 0 0 0.6px #c2c2c2;"></div>
<div style="position:absolute;left:941px;top:658.4px;width:280.5px;height:15.8px;background:#fff;box-shadow:0 0 0 0.6px #c2c2c2;"></div>
<div style="position:absolute;left:1244.6px;top:658.4px;width:15.6px;height:15.8px;background:#fff;box-shadow:0 0 0 0.6px #c2c2c2;"></div>
<svg style="position:absolute;left:783px;top:662px;" width="8" height="10" viewBox="0 0 8 10"><path d="M1.5 5L6.5 1V9Z" fill="#222"/></svg>
<svg style="position:absolute;left:1249px;top:662px;" width="8" height="10" viewBox="0 0 8 10"><path d="M6.5 5L1.5 1V9Z" fill="#222"/></svg>
<div style="position:absolute;left:765.3px;top:661.5px;width:1.6px;height:1.6px;background:#9a9a9a;border-radius:1px;"></div>
<div style="position:absolute;left:765.3px;top:665.5px;width:1.6px;height:1.6px;background:#9a9a9a;border-radius:1px;"></div>
<div style="position:absolute;left:765.3px;top:669.5px;width:1.6px;height:1.6px;background:#9a9a9a;border-radius:1px;"></div>
<svg style="position:absolute;left:18px;top:661px;" width="7" height="10" viewBox="0 0 7 10"><path d="M5.5 1L1 5L5.5 9Z" fill="#444"/></svg>
<svg style="position:absolute;left:41px;top:661px;" width="7" height="10" viewBox="0 0 7 10"><path d="M1.5 1L6 5L1.5 9Z" fill="#c8c8c8"/></svg>
<span style='position:absolute;left:61.50px;top:659.22px;font-size:13px;line-height:13px;color:#333;white-space:pre;transform-origin:0 0;transform:scaleX(0.9867);font-weight:700;'>...</span>
<div style="position:absolute;left:78.2px;top:658px;width:1px;height:18px;background:#c4c4c4;"></div>
<div style="position:absolute;left:150.2px;top:658px;width:1px;height:18px;background:#c4c4c4;"></div>
<div style="position:absolute;left:233.5px;top:658px;width:1px;height:18px;background:#c4c4c4;"></div>
<div style="position:absolute;left:344px;top:658px;width:1px;height:18px;background:#c4c4c4;"></div>
<span style='position:absolute;left:89.00px;top:659.22px;font-size:13px;line-height:13px;color:#4d4d4d;white-space:pre;transform-origin:0 0;transform:scaleX(0.9573);'>Acciones</span>
<span style='position:absolute;left:162.00px;top:659.22px;font-size:13px;line-height:13px;color:#4d4d4d;white-space:pre;transform-origin:0 0;transform:scaleX(0.9769);'>Table 0 (2)</span>
<span style='position:absolute;left:247.00px;top:659.22px;font-size:13px;line-height:13px;color:#4d4d4d;white-space:pre;transform-origin:0 0;transform:scaleX(0.9887);'>Matriz Riesgos</span>
<span style='position:absolute;left:357.50px;top:659.22px;font-size:13px;line-height:13px;color:#4d4d4d;white-space:pre;transform-origin:0 0;transform:scaleX(0.9813);'>Matriz Riesgos (2)</span>
<div style="position:absolute;left:475px;top:655px;width:59px;height:21.5px;background:#fff;"></div>
<div style="position:absolute;left:475px;top:674.8px;width:59px;height:1.6px;background:#217346;"></div>
<span style='position:absolute;left:483.00px;top:659.22px;font-size:13px;line-height:13px;color:#1e6f43;white-space:pre;transform-origin:0 0;transform:scaleX(0.9850);font-weight:700;'>Sheet5</span>
<svg style="position:absolute;left:559px;top:659px;" width="16" height="16" viewBox="0 0 16 16"><circle cx="8" cy="8" r="6.6" fill="none" stroke="#6a6a6a" stroke-width="1"/><path d="M8 4.6V11.4M4.6 8H11.4" stroke="#6a6a6a" stroke-width="1" fill="none"/></svg>
<span style='position:absolute;left:6.60px;top:684.33px;font-size:10.5px;line-height:10.5px;color:#4a4846;white-space:pre;transform-origin:0 0;transform:scaleX(0.9256);'>Ready</span>
<span style='position:absolute;left:72.20px;top:684.33px;font-size:10.5px;line-height:10.5px;color:#4a4846;white-space:pre;transform-origin:0 0;transform:scaleX(0.9647);'>Accessibility: Investigate</span>
<div style="position:absolute;left:983.1px;top:678.4px;width:40px;height:21.6px;background:#d6d5d4;"></div>
<span style='position:absolute;left:1247.30px;top:684.33px;font-size:10.5px;line-height:10.5px;color:#4a4846;white-space:pre;transform-origin:0 0;transform:scaleX(0.9531);'>100%</span>
<div style="position:absolute;left:1122.5px;top:688.3px;width:98.5px;height:1.2px;background:#5a5a5a;"></div>
<div style="position:absolute;left:1169px;top:682.5px;width:5px;height:13px;background:#444;"></div>
<svg style="position:absolute;left:0;top:0" width="1280" height="720" viewBox="0 0 1280 720"><path d="M126.3 31H139.5L141.5 33V38.5M126.3 31V42.5L128.8 45H133" stroke="#c4ecd4" stroke-width="1.1" fill="none" /><path d="M129.3 31.2V35.8H138V31.2M135.6 31.5V34" stroke="#c4ecd4" stroke-width="1.1" fill="none" /><path d="M129.5 45V40.5H133" stroke="#c4ecd4" stroke-width="1.1" fill="none" /><path d="M134.3 41.2A3.6 3.6 0 0 1 141 40.2M141.3 42.6A3.6 3.6 0 0 1 134.6 43.8" stroke="#c4ecd4" stroke-width="1.1" fill="none" /><path d="M141.3 37.8V40.6H138.6M134.2 46V43.4H136.8" stroke="#c4ecd4" stroke-width="1" fill="none" /><path d="M155.8 30V36.3H162M156 36.1C158 32.2 163.2 30.6 166.8 33.2C170.2 36 169 40.3 166 42.3L161.5 45.8" stroke="#58a07a" stroke-width="1.2" fill="none" stroke-linecap="round" stroke-linejoin="round"/><path d="M176.39999999999998 35.35L178.7 37.65L181.0 35.35" stroke="#58a07a" stroke-width="1.1" fill="none" stroke-linecap="round" stroke-linejoin="round"/><path d="M207.2 30V36.3H201M207 36.1C205 32.2 199.8 30.6 196.2 33.2C192.8 36 194 40.3 197 42.3L201.5 45.8" stroke="#58a07a" stroke-width="1.2" fill="none" stroke-linecap="round" stroke-linejoin="round"/><path d="M214.39999999999998 35.35L216.7 37.65L219.0 35.35" stroke="#58a07a" stroke-width="1.1" fill="none" stroke-linecap="round" stroke-linejoin="round"/><path d="M230.8 30.8H246.8L240.6 38.3V45.3H237V38.3Z" stroke="#c4ecd4" stroke-width="1.2" fill="none" stroke-linejoin="round"/><path d="M275.5 36V30.7H260.5V45.3H266.5" stroke="#c4ecd4" stroke-width="1.1" fill="none" /><path d="M260.5 33.6H275.5M263 36.3H268M263 39.4H266.5M263 42.4H266.5" stroke="#c4ecd4" stroke-width="1.1" fill="none" /><path d="M267.5 37.3H277L273.6 41.3V45.6H270.9V41.3Z" stroke="#c4ecd4" stroke-width="1.1" fill="none" stroke-linejoin="round"/><path d="M293.3 34.3H300.3" stroke="#c4ecd4" stroke-width="1.1" fill="none" /><path d="M293.6 36.8L296.8 39.8L300 36.8" stroke="#c4ecd4" stroke-width="1.1" fill="none" /><path d="M439.5 34.8L443.3 38.6L447.1 34.8" stroke="#c4ecd4" stroke-width="1.3" fill="none" stroke-linecap="round" stroke-linejoin="round"/><circle cx="510.3" cy="34.3" r="4.4" fill="none" stroke="#2c6b4a" stroke-width="1.2"/><path d="M507.2 37.6L501.6 43.3" stroke="#2c6b4a" stroke-width="1.2" fill="none" stroke-linecap="round"/><circle cx="1026.9" cy="36.5" r="12.1" fill="#0d2016"/><clipPath id="avc"><circle cx="1026.9" cy="36.5" r="12.1"/></clipPath><g clip-path="url(#avc)"><path d="M1021 47.5C1020.6 41 1021.2 33.5 1023 29.6C1023.8 27.4 1026.6 27.2 1027.4 29.2C1028.2 31.4 1027.6 34.2 1027.8 36.4C1028 40 1027.6 44 1027 47.6Z" stroke="none" stroke-width="0" fill="#e9c9c4" /><path d="M1027.2 33.6C1029.6 31.6 1033.4 32.4 1034.6 35.4C1036.2 39 1037.2 43 1037.4 46.4C1034.6 49.4 1029.6 49.6 1026.4 48.4C1027.4 44 1027.6 38.6 1027.2 33.6Z" stroke="none" stroke-width="0" fill="#f3f4ef" /><path d="M1024.6 30.4C1025.4 29.6 1026.6 29.8 1026.8 31C1027 33.6 1026.6 37 1025.4 39C1024.4 37 1024 33 1024.6 30.4Z" stroke="none" stroke-width="0" fill="#c99a90" /></g><path d="M1066.6 42L1074.4 30.8L1080.4 35.8L1069.4 44.2C1067.8 45.2 1065.8 43.6 1066.6 42Z" stroke="#c4ecd4" stroke-width="1.1" fill="none" stroke-linejoin="round"/><path d="M1072.2 42.2C1072.2 44.4 1075.2 44.6 1075.6 42.4L1075.8 39.6" stroke="#c4ecd4" stroke-width="1.1" fill="none" stroke-linecap="round"/><path d="M1077 29.4L1078 27.8M1080 31L1081.6 29M1081.8 33.6L1083.2 33" stroke="#c4ecd4" stroke-width="1.1" fill="none" stroke-linecap="round"/><path d="M1111.5 32.2H1124.8V42.2H1111.5ZM1111.5 34.6H1124.8" stroke="#c4ecd4" stroke-width="1.1" fill="none" /><path d="M1118.1 41V36.6M1115.9 38.6L1118.1 36.4L1120.3 38.6" stroke="#c4ecd4" stroke-width="1.1" fill="none" /><path d="M1160 36.6H1170" stroke="#c4ecd4" stroke-width="1.1" fill="none" /><path d="M1206.2 34.3H1213.6V42.2H1206.2ZM1208.4 34.3V32.2H1215.8V40H1213.6" stroke="#c4ecd4" stroke-width="1.1" fill="none" stroke-linejoin="round"/><path d="M1252.2 32.2L1262 42M1262 32.2L1252.2 42" stroke="#c4ecd4" stroke-width="1.2" fill="none" /><path d="M21.5 95.5H17.8V118.8H30M33.2 95.5H36.8V103" stroke="#c6c4c2" stroke-width="1.2" fill="#efedeb" /><path d="M22 97.5V94.6C22 93.8 22.5 93.4 23.2 93.4H25C25.3 91.6 29.4 91.6 29.7 93.4H31.6C32.3 93.4 32.8 93.8 32.8 94.6V97.5Z" stroke="#c6c4c2" stroke-width="1.1" fill="#eceae8" /><path d="M31 103.6H43.6V120.4H31Z" stroke="#c6c4c2" stroke-width="1.2" fill="#efedeb" /><path d="M25.3 146.15L27.6 148.45000000000002L29.900000000000002 146.15" stroke="#c2c0be" stroke-width="1" fill="none" stroke-linecap="round" stroke-linejoin="round"/><path d="M56.6 92.6L62 103.2M62.8 92.6L57.4 103.2" stroke="#3b3a39" stroke-width="1.1" fill="none" stroke-linecap="round"/><circle cx="56.6" cy="105" r="1.7" fill="none" stroke="#2f9a9a" stroke-width="1.1"/><circle cx="62.8" cy="105" r="1.7" fill="none" stroke="#2f9a9a" stroke-width="1.1"/><path d="M57.8 128.6H53.4C52.7 128.6 52.3 128.2 52.3 127.5V117C52.3 116.3 52.7 115.9 53.4 115.9H58.6" stroke="#3b3a39" stroke-width="1.1" fill="none" /><path d="M58.6 117.6H63.4L67 121.2V129.4C67 130 66.6 130.4 66 130.4H59.6C59 130.4 58.6 130 58.6 129.4Z" stroke="#3b3a39" stroke-width="1.1" fill="#fafafa" stroke-linejoin="round"/><path d="M61.3 124.3H64.5V127.6H61.3Z" stroke="#9a9896" stroke-width="0.8" fill="#c8c6c4" /><path d="M74.8 122.95L77.3 125.45L79.8 122.95" stroke="#3b3a39" stroke-width="1.1" fill="none" stroke-linecap="round" stroke-linejoin="round"/><path d="M66.8 140L63 145.4" stroke="#3b3a39" stroke-width="1.8" fill="none" stroke-linecap="round"/><path d="M59 143.3L64.6 147.4L63.4 149L57.8 144.9Z" stroke="#3b3a39" stroke-width="1" fill="#fff" stroke-linejoin="round"/><path d="M57.6 145.4L63 149.4L60.2 153.6L52.9 148.4Z" stroke="#e8912d" stroke-width="1.1" fill="#fbe3c0" stroke-linejoin="round"/><path d="M56.2 149.6L58.6 152.4" stroke="#e8912d" stroke-width="1" fill="none" /><path d="M83 173.20000000000002V167.8H88.4" stroke="#484644" stroke-width="1.2" fill="none" /><path d="M85.8 170.60000000000002L90 174.8" stroke="#484644" stroke-width="1.2" fill="none" /><path d="M90.6 171.4V175.4H86.6Z" stroke="#484644" stroke-width="0.6" fill="#484644" /><path d="M207.2 107.05L209.7 109.55L212.2 107.05" stroke="#3b3a39" stroke-width="1.2" fill="none" stroke-linecap="round" stroke-linejoin="round"/><path d="M251.0 107.05L253.5 109.55L256.0 107.05" stroke="#3b3a39" stroke-width="1.2" fill="none" stroke-linecap="round" stroke-linejoin="round"/><path d="M277 103L278.6 101.2L280.2 103" stroke="#3b3a39" stroke-width="1" fill="none" /><path d="M298.6 101.2L300.2 103L301.8 101.2" stroke="#3b3a39" stroke-width="1" fill="none" /><path d="M173.4 138.35L175.9 140.85L178.4 138.35" stroke="#3b3a39" stroke-width="1.1" fill="none" stroke-linecap="round" stroke-linejoin="round"/><path d="M215.3 138.35L217.8 140.85L220.3 138.35" stroke="#3b3a39" stroke-width="1.1" fill="none" stroke-linecap="round" stroke-linejoin="round"/><path d="M257.4 138.35L259.9 140.85L262.4 138.35" stroke="#3b3a39" stroke-width="1.1" fill="none" stroke-linecap="round" stroke-linejoin="round"/><path d="M294.9 138.35L297.4 140.85L299.9 138.35" stroke="#3b3a39" stroke-width="1.1" fill="none" stroke-linecap="round" stroke-linejoin="round"/><path d="M192.8 132.1H207V145.1H192.8ZM199.9 132.1V145.1M192.8 138.6H207" stroke="#3b3a39" stroke-width="1.3" fill="none" /><path d="M241.2 132.6L246.6 137.6L242.2 142L237.6 137.2Z" stroke="#3b3a39" stroke-width="1.1" fill="none" stroke-linejoin="round"/><path d="M241.4 132.8C242.4 130.6 245 131 244.6 133.6M246.8 137.2C248.4 137.2 249 138.6 248.6 140.6" stroke="#3b3a39" stroke-width="1" fill="none" /><path d="M301.2 173.20000000000002V167.8H306.59999999999997" stroke="#484644" stroke-width="1.2" fill="none" /><path d="M304.0 170.60000000000002L308.2 174.8" stroke="#484644" stroke-width="1.2" fill="none" /><path d="M308.8 171.4V175.4H304.8Z" stroke="#484644" stroke-width="0.6" fill="#484644" /><path d="M324.7 99.6H338.8" stroke="#3b3a39" stroke-width="1.15" fill="none" /><path d="M324.7 108H338.8" stroke="#3b3a39" stroke-width="1.15" fill="none" /><path d="M326 103.8H337.5" stroke="#3b3a39" stroke-width="1.15" fill="none" /><path d="M347.2 102.5H361.7" stroke="#3b3a39" stroke-width="1.15" fill="none" /><path d="M347.2 110.8H361.7" stroke="#3b3a39" stroke-width="1.15" fill="none" /><path d="M348.5 106.7H360.4" stroke="#3b3a39" stroke-width="1.15" fill="none" /><path d="M370.2 106.3H384.5" stroke="#3b3a39" stroke-width="1.4" fill="none" /><path d="M370.2 114.7H384.5" stroke="#3b3a39" stroke-width="1.4" fill="none" /><path d="M371.2 110.5H383.5" stroke="#3b3a39" stroke-width="1.4" fill="none" /><text x="0" y="0" transform="translate(394.3 110.2) rotate(-42)" font-family="Liberation Sans, sans-serif" font-size="10" fill="#3b3a39">ab</text><path d="M396 114L408 101.2" stroke="#3b3a39" stroke-width="1" fill="none" /><path d="M404.4 101.6L408.3 100.8L407.6 104.8" stroke="#2f86c4" stroke-width="1.1" fill="none" stroke-linejoin="round"/><path d="M412.9 107.15L415.4 109.65L417.9 107.15" stroke="#3b3a39" stroke-width="1.1" fill="none" stroke-linecap="round" stroke-linejoin="round"/><text x="447.6" y="107.6" font-family="Liberation Sans, sans-serif" font-size="10.5" fill="#3b3a39" textLength="12.6" lengthAdjust="spacingAndGlyphs">ab</text><text x="447.8" y="114.8" font-family="Liberation Sans, sans-serif" font-size="9.5" fill="#3b3a39">c</text><path d="M460.6 108.4V110C460.6 111.6 459.6 112.3 458.4 112.3H454.4M456.6 109.8L454.2 112.3L456.6 114.8" stroke="#2f9a9a" stroke-width="1.1" fill="none" stroke-linejoin="round" stroke-linecap="round"/><path d="M324.7 132.7H338.8" stroke="#3b3a39" stroke-width="1.15" fill="none" /><path d="M324.7 140.7H338.8" stroke="#3b3a39" stroke-width="1.15" fill="none" /><path d="M324.7 136.8H334.2" stroke="#3b3a39" stroke-width="1.15" fill="none" /><path d="M324.7 144.7H334.2" stroke="#3b3a39" stroke-width="1.15" fill="none" /><path d="M347.2 132.7H361.7" stroke="#3b3a39" stroke-width="1.15" fill="none" /><path d="M347.2 140.7H361.7" stroke="#3b3a39" stroke-width="1.15" fill="none" /><path d="M349.6 136.8H359.3" stroke="#3b3a39" stroke-width="1.15" fill="none" /><path d="M349.6 144.7H359.3" stroke="#3b3a39" stroke-width="1.15" fill="none" /><path d="M370.2 132.7H384.5" stroke="#3b3a39" stroke-width="1.15" fill="none" /><path d="M370.2 140.7H384.5" stroke="#3b3a39" stroke-width="1.15" fill="none" /><path d="M374.8 136.8H384.5" stroke="#3b3a39" stroke-width="1.15" fill="none" /><path d="M374.8 144.7H384.5" stroke="#3b3a39" stroke-width="1.15" fill="none" /><path d="M393 132.7H407.7" stroke="#3b3a39" stroke-width="1.15" fill="none" /><path d="M393 144.7H407.7" stroke="#3b3a39" stroke-width="1.15" fill="none" /><path d="M401.6 136.8H407.7" stroke="#3b3a39" stroke-width="1.15" fill="none" /><path d="M401.6 140.7H407.7" stroke="#3b3a39" stroke-width="1.15" fill="none" /><path d="M399.2 138.7H393.6M395.8 136.5L393.6 138.7L395.8 140.9" stroke="#2f9a9a" stroke-width="1.1" fill="none" stroke-linejoin="round"/><path d="M416 132.7H430.6" stroke="#3b3a39" stroke-width="1.15" fill="none" /><path d="M416 144.7H430.6" stroke="#3b3a39" stroke-width="1.15" fill="none" /><path d="M424.6 136.8H430.6" stroke="#3b3a39" stroke-width="1.15" fill="none" /><path d="M424.6 140.7H430.6" stroke="#3b3a39" stroke-width="1.15" fill="none" /><path d="M416.4 138.7H422M419.8 136.5L422 138.7L419.8 140.9" stroke="#2f9a9a" stroke-width="1.1" fill="none" stroke-linejoin="round"/><path d="M445.6 131.9H460V145.5H445.6Z" stroke="#3b3a39" stroke-width="1.1" fill="#fff" /><path d="M446.2 135.2H459.4V142.2H446.2Z" stroke="#2f8f9c" stroke-width="1" fill="#d4eef0" /><path d="M445.6 135.2H460M445.6 142.2H460M452.8 131.9V135.2M452.8 142.2V145.5" stroke="#3b3a39" stroke-width="1" fill="none" /><path d="M448.4 138.7H457.2M450.2 136.9L448.4 138.7L450.2 140.5M455.4 136.9L457.2 138.7L455.4 140.5" stroke="#2b7c8a" stroke-width="1" fill="none" stroke-linejoin="round"/><path d="M468.2 138.75L470.7 141.25L473.2 138.75" stroke="#3b3a39" stroke-width="1.1" fill="none" stroke-linecap="round" stroke-linejoin="round"/><path d="M476.5 173.20000000000002V167.8H481.9" stroke="#484644" stroke-width="1.2" fill="none" /><path d="M479.3 170.60000000000002L483.5 174.8" stroke="#484644" stroke-width="1.2" fill="none" /><path d="M484.1 171.4V175.4H480.1Z" stroke="#484644" stroke-width="0.6" fill="#484644" /><path d="M568.8 99.05L571.3 101.55L573.8 99.05" stroke="#3b3a39" stroke-width="1.2" fill="none" stroke-linecap="round" stroke-linejoin="round"/><path d="M521.7 122.85L524 125.15L526.3 122.85" stroke="#3b3a39" stroke-width="1.1" fill="none" stroke-linecap="round" stroke-linejoin="round"/><path d="M567.4 117.6C569.8 117.6 571.4 119.4 571.4 122C571.4 125.4 569 128 565.2 129.4L564.6 128.4C566.6 127.4 567.8 126 568 124.4C565.8 124.8 563.8 123.4 563.8 121.2C563.8 119.2 565.4 117.6 567.4 117.6Z" stroke="none" stroke-width="0" fill="#2b2a29" /><text x="507" y="146.6" font-family="Liberation Sans, sans-serif" font-size="8.6" fill="#3b3a39" textLength="7" lengthAdjust="spacingAndGlyphs" >.0</text><text x="500.6" y="154" font-family="Liberation Sans, sans-serif" font-size="8.6" fill="#3b3a39" textLength="13" lengthAdjust="spacingAndGlyphs" >.00</text><path d="M506 143.2H499.8M502.2 140.8L499.8 143.2L502.2 145.6" stroke="#2f8fa0" stroke-width="1.1" fill="none" stroke-linejoin="round"/><text x="523.6" y="146.6" font-family="Liberation Sans, sans-serif" font-size="8.6" fill="#3b3a39" textLength="13" lengthAdjust="spacingAndGlyphs" >.00</text><text x="529.6" y="154" font-family="Liberation Sans, sans-serif" font-size="8.6" fill="#3b3a39" textLength="7" lengthAdjust="spacingAndGlyphs" >.0</text><path d="M521.6 150.6H527.8M525.4 148.2L527.8 150.6L525.4 153" stroke="#2f8fa0" stroke-width="1.1" fill="none" stroke-linejoin="round"/><path d="M573.5 173.20000000000002V167.8H578.9" stroke="#484644" stroke-width="1.2" fill="none" /><path d="M576.3 170.60000000000002L580.5 174.8" stroke="#484644" stroke-width="1.2" fill="none" /><path d="M581.1 171.4V175.4H577.1Z" stroke="#484644" stroke-width="0.6" fill="#484644" /><path d="M596.8 90.9H611.2V103.8H596.8Z" stroke="#3b3a39" stroke-width="1" fill="#fff" /><path d="M597.3 91.4H601.5V103.3H597.3Z" stroke="none" stroke-width="0" fill="#e8506a" /><path d="M601.5 91.4H610.7V94.6H601.5Z" stroke="none" stroke-width="0" fill="#f3a0ae" /><path d="M601.5 94.6H604.6V97.6H601.5Z" stroke="none" stroke-width="0" fill="#4a90d9" /><path d="M601.5 100.6H606.4V103.3H601.5Z" stroke="none" stroke-width="0" fill="#e8506a" /><path d="M601.5 90.9V103.8M606.4 90.9V103.8M596.8 94.6H611.2M596.8 97.6H611.2M596.8 100.6H611.2" stroke="#8a3a48" stroke-width="0.7" fill="none" /><path d="M596.8 90.9H611.2V103.8H596.8Z" stroke="#3b3a39" stroke-width="1" fill="none" /><path d="M596.8 113.5H611.2V126.5H596.8Z" stroke="#3b3a39" stroke-width="1" fill="#fff" /><path d="M601.5 118H611V126.3H601.5Z" stroke="none" stroke-width="0" fill="#8cc4ee" /><path d="M601.5 113.5V126.5M606.4 113.5V126.5M596.8 118H611.2M596.8 122.2H611.2" stroke="#3b3a39" stroke-width="0.8" fill="none" /><path d="M600.4 127.2L602 123.4L609.6 116L611.8 118.2L604.2 125.6Z" stroke="#2b2a29" stroke-width="0.9" fill="#fff" stroke-linejoin="round"/><path d="M600.4 127.2L602 123.4L604.2 125.6Z" stroke="none" stroke-width="0" fill="#2f86c4" /><path d="M596.8 136.2H611.2V149.2H596.8Z" stroke="#3b3a39" stroke-width="1" fill="#fff" /><path d="M597.4 139.6H608V148.6H597.4Z" stroke="none" stroke-width="0" fill="#8cc4ee" /><path d="M596.8 139.6H611.2M600.6 136.2V139.6" stroke="#3b3a39" stroke-width="0.8" fill="none" /><path d="M600.4 149.8L602 146L609.6 138.6L611.8 140.8L604.2 148.2Z" stroke="#2b2a29" stroke-width="0.9" fill="#fff" stroke-linejoin="round"/><path d="M600.4 149.8L602 146L604.2 148.2Z" stroke="none" stroke-width="0" fill="#2f86c4" /><path d="M741.8000000000001 96.8L744.2 99.2L746.6 96.8" stroke="#3b3a39" stroke-width="1.1" fill="none" stroke-linecap="round" stroke-linejoin="round"/><path d="M701.8000000000001 119.3L704.2 121.7L706.6 119.3" stroke="#3b3a39" stroke-width="1.1" fill="none" stroke-linecap="round" stroke-linejoin="round"/><path d="M670.8000000000001 141.8L673.2 144.2L675.6 141.8" stroke="#3b3a39" stroke-width="1.1" fill="none" stroke-linecap="round" stroke-linejoin="round"/><path d="M776.4 90.8H788.8V103.6H776.4Z" stroke="#3b3a39" stroke-width="1" fill="#fff" /><path d="M777.6 95H788.4V99.4H777.6Z" stroke="none" stroke-width="0" fill="#5aa0e6" /><path d="M780.6 90.8V103.6M784.8 90.8V103.6M776.4 95H788.8M776.4 99.4H788.8" stroke="#3b3a39" stroke-width="0.8" fill="none" /><path d="M779.6 97.2H773.4M775.8 94.8L773.4 97.2L775.8 99.6" stroke="#3c8ad8" stroke-width="1.1" fill="none" stroke-linejoin="round"/><path d="M774 113.6H788.8V126.6H774Z" stroke="#3b3a39" stroke-width="1" fill="#fff" stroke-dasharray="2 1.2"/><path d="M778 117.6H783V122.4H778Z" stroke="none" stroke-width="0" fill="#5aa0e6" /><path d="M774 117.6H782M774 122.4H782M778 113.6V126.6M782.6 113.6V117M782.6 123V126.6" stroke="#3b3a39" stroke-width="0.8" fill="none" /><path d="M784 117.6L788.6 122.4M788.6 117.6L784 122.4" stroke="#d83b3b" stroke-width="1.2" fill="none" /><path d="M774 137.4H788.8V150.2H774Z" stroke="#3b3a39" stroke-width="1" fill="#fff" /><path d="M778 141.4H785V146.4H778Z" stroke="none" stroke-width="0" fill="#5aa0e6" /><path d="M778 137.4V150.2M785 137.4V150.2M774 141.4H788.8M774 146.4H788.8" stroke="#3b3a39" stroke-width="0.8" fill="none" /><path d="M776.4 135.6H786.6M776.4 134.6V136.6M786.6 134.6V136.6" stroke="#3c8ad8" stroke-width="0.9" fill="none" /><path d="M831.8000000000001 97.2L834.2 99.60000000000001L836.6 97.2" stroke="#3b3a39" stroke-width="1.1" fill="none" stroke-linecap="round" stroke-linejoin="round"/><path d="M836.0 119.6L838.4 122.0L840.8 119.6" stroke="#3b3a39" stroke-width="1.1" fill="none" stroke-linecap="round" stroke-linejoin="round"/><path d="M834.8000000000001 142.20000000000002L837.2 144.6L839.6 142.20000000000002" stroke="#3b3a39" stroke-width="1.1" fill="none" stroke-linecap="round" stroke-linejoin="round"/><path d="M880 93V90.8H868.6L874.6 97.2L868.6 103.6H880V101.4" stroke="#2b2a29" stroke-width="1.2" fill="none" stroke-linejoin="miter"/><path d="M889.0 97.2L891.4 99.60000000000001L893.8 97.2" stroke="#3b3a39" stroke-width="1.1" fill="none" stroke-linecap="round" stroke-linejoin="round"/><text x="903.2" y="96.6" font-family="Liberation Sans, sans-serif" font-size="8.4" fill="#2f86c4" font-weight='700'>A</text><text x="903.4" y="105.2" font-family="Liberation Sans, sans-serif" font-size="9.4" fill="#2b2a29" font-weight='700'>Z</text><path d="M910.6 93.8H919.4L916.2 97.8V102.2L913.8 100.6V97.8Z" stroke="#2b2a29" stroke-width="1.1" fill="none" stroke-linejoin="round"/><path d="M923.8000000000001 97.2L926.2 99.60000000000001L928.6 97.2" stroke="#3b3a39" stroke-width="1.1" fill="none" stroke-linecap="round" stroke-linejoin="round"/><path d="M866.6 113.6H881.6V126.6H866.6ZM866.6 116.2H881.6" stroke="#3b3a39" stroke-width="1.1" fill="#fff" /><path d="M874.1 118.2V124.4M871.6 122L874.1 124.5L876.6 122" stroke="#2f9a8a" stroke-width="1.1" fill="none" stroke-linejoin="round"/><path d="M886.4 119.6L888.8 122.0L891.1999999999999 119.6" stroke="#3b3a39" stroke-width="1.1" fill="none" stroke-linecap="round" stroke-linejoin="round"/><circle cx="913.7" cy="117.5" r="4.5" fill="none" stroke="#2b2a29" stroke-width="1.1"/><path d="M910.5 120.8L904.6 127" stroke="#2b2a29" stroke-width="1.2" fill="none" stroke-linecap="round"/><path d="M923.8000000000001 119.6L926.2 122.0L928.6 119.6" stroke="#3b3a39" stroke-width="1.1" fill="none" stroke-linecap="round" stroke-linejoin="round"/><path d="M866.8 144.2L875.4 135.6L881.2 141L872.6 149.6Z" stroke="#a55bb5" stroke-width="1" fill="#fff" stroke-linejoin="round"/><path d="M866.8 144.2L871 140L876.6 145.6L872.6 149.6Z" stroke="#a55bb5" stroke-width="1" fill="#cf8fdb" stroke-linejoin="round"/><path d="M886.4 142.4L888.8 144.79999999999998L891.1999999999999 142.4" stroke="#3b3a39" stroke-width="1.1" fill="none" stroke-linecap="round" stroke-linejoin="round"/><path d="M958.3 89.8H989.7V120.3H958.3Z" stroke="#2b2a29" stroke-width="1.2" fill="#fff" /><path d="M958.9 90.4H989.1V93.6H958.9Z" stroke="none" stroke-width="0" fill="#c8c6c4" /><path d="M958.3 93.8H989.7M958.3 102.6H989.7M958.3 111.4H989.7M968.8 93.8V120.3M979.2 93.8V120.3" stroke="#6b6967" stroke-width="0.9" fill="none" /><circle cx="973.3" cy="102.8" r="9.8" fill="#fff" stroke="#2b2a29" stroke-width="1.2"/><path d="M968 101H971.2V107.4H968Z" stroke="#d9a070" stroke-width="0.6" fill="#f2c8a2" /><path d="M971.6 97H975.2V107.4H971.6Z" stroke="#2f86c4" stroke-width="0.7" fill="#8cc4ee" /><path d="M975.6 99.6H979V107.4H975.6Z" stroke="#2f86c4" stroke-width="0.7" fill="#5aa8e6" /><path d="M980.6 110.2L990 120" stroke="#2b2a29" stroke-width="1.5" fill="none" stroke-linecap="round"/><path d="M1041 91.8H1030.8V118.6H1051V106" stroke="#c9c7c5" stroke-width="1.2" fill="none" /><path d="M1035.6 102.4L1038.4 99.6L1047.2 108.4L1044.4 111.2Z" stroke="#c9c7c5" stroke-width="1.1" fill="none" /><path d="M1041.4 97.2L1046 92.6L1053.8 100.4L1049.2 105Z" stroke="#c9c7c5" stroke-width="1.1" fill="none" /><path d="M1048.2 94.6L1051.8 91L1056.6 95.8L1053 99.4" stroke="#c9c7c5" stroke-width="1.1" fill="none" /><path d="M1038.7 145.65L1041 147.95000000000002L1043.3 145.65" stroke="#c2c0be" stroke-width="1" fill="none" stroke-linecap="round" stroke-linejoin="round"/><path d="M1094.2 91H1103.4V104H1094.2Z" stroke="#b3b1af" stroke-width="0.8" fill="#aeacaa" /><path d="M1096.2 92.4H1102V95.2H1096.2Z" stroke="none" stroke-width="0" fill="#dddbd9" /><path d="M1093.4 91V104" stroke="#c9c7c5" stroke-width="1" fill="none" /><text x="1091.8" y="121" font-family="Liberation Sans, sans-serif" font-size="10.5" fill="#3b3a39" >a</text><text x="1095.6" y="127.6" font-family="Liberation Sans, sans-serif" font-size="12.5" fill="#3b3a39" font-family='Noto Sans CJK JP, sans-serif'>あ</text><path d="M1198 64H1208V71H1202L1199.6 73.4V71H1198Z" stroke="#3b3a39" stroke-width="1" fill="none" stroke-linejoin="round"/><path d="M1239 66.4H1235.4V74H1245.4V71M1239.4 70.6C1239.6 67.6 1241.4 66.2 1244 66.2M1242.2 63.8L1244.8 66.2L1242.2 68.6" stroke="#3b3a39" stroke-width="1" fill="none" stroke-linejoin="round"/><path d="M1257.1999999999998 67.39999999999999L1259.6 69.8L1262.0 67.39999999999999" stroke="#3b3a39" stroke-width="1.1" fill="none" stroke-linecap="round" stroke-linejoin="round"/><path d="M1262.6 175.2L1267 170.9L1271.4 175.2" stroke="#2b2a29" stroke-width="1.3" fill="none" stroke-linejoin="round"/><path d="M93.4 200.6H98.6L96 203.2Z" stroke="none" stroke-width="0" fill="#5e5e5e" /><circle cx="119.9" cy="196.9" r="0.85" fill="#a6a6a6"/><circle cx="119.9" cy="201.2" r="0.85" fill="#a6a6a6"/><circle cx="119.9" cy="205.5" r="0.85" fill="#a6a6a6"/><path d="M149.6 196.9L159.2 206.4M159.2 196.9L149.6 206.4" stroke="#b0b0b0" stroke-width="1.2" fill="none" /><path d="M184.2 202.2L188.2 206.2L196.8 196.6" stroke="#b0b0b0" stroke-width="1.4" fill="none" stroke-linejoin="round"/><path d="M1263.4 200.6L1266.9 204L1270.4 200.6" stroke="#444" stroke-width="1.5" fill="none" stroke-linejoin="round"/><circle cx="1028" cy="573.2" r="5.5" fill="#f4fbff" stroke="#2c86c2" stroke-width="2.2"/><path d="M1023.4 576.2A5.5 5.5 0 0 1 1024.6 568.9" stroke="#3aa8b0" stroke-width="2.2" fill="none" /><path d="M1013.7 573.4V588.6L1017.3 585.4L1019.8 590.8L1022.6 589.6L1020.1 584.3L1025 584.1Z" stroke="#2a2a2a" stroke-width="1" fill="#fff" stroke-linejoin="round"/><path d="M996.9 682.8H1009.5V694.9H996.9ZM1001.1 682.8V694.9M1005.3 682.8V694.9M996.9 686.8H1009.5M996.9 690.9H1009.5" stroke="#555452" stroke-width="1.5" fill="none" /><path d="M1036.9 682.8H1050V694.9H1036.9Z" stroke="#555452" stroke-width="1.4" fill="none" /><path d="M1040 685.2H1046.9V694.6M1040 685.2V694.6" stroke="#555452" stroke-width="1.1" fill="none" /><path d="M1041.6 687.6H1045.3M1041.6 689.8H1045.3M1041.6 692H1045.3" stroke="#555452" stroke-width="0.9" fill="none" /><path d="M1076.9 682.8H1090.2V694.9H1076.9Z" stroke="#555452" stroke-width="1.4" fill="none" /><path d="M1081.6 682.8V690.4M1085.6 682.8V690.4M1076.9 690.4H1085.6" stroke="#555452" stroke-width="1.2" fill="none" /><path d="M1108.8 689H1116.2" stroke="#8a8886" stroke-width="1.3" fill="none" /><path d="M1226.8 689H1233.8M1230.3 685.5V692.5" stroke="#6a6866" stroke-width="1.2" fill="none" /><circle cx="60.4" cy="684.4" r="1.7" fill="none" stroke="#3b3a39" stroke-width="1"/><path d="M54.6 687.4C57 688.4 63.8 688.4 66.2 687.4M58.6 688.2V691L56.2 695.8M62.2 688.2V690.4L63.2 692" stroke="#3b3a39" stroke-width="1.1" fill="none" stroke-linecap="round" stroke-linejoin="round"/><path d="M62.6 692.4L66.6 696.4M66.6 692.4L62.6 696.4" stroke="#3b3a39" stroke-width="1.1" fill="none" stroke-linecap="round"/></svg>
</div></body></html>
